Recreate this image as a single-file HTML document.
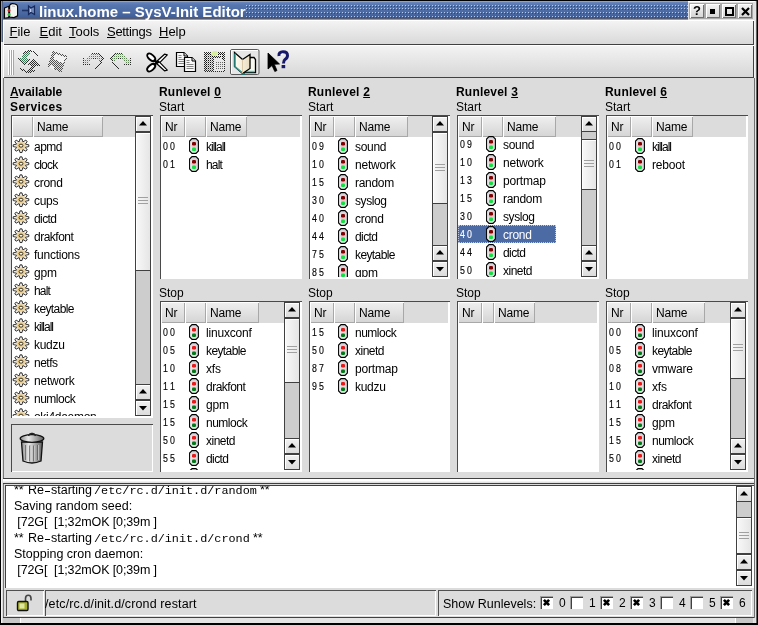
<!DOCTYPE html><html><head><meta charset="utf-8"><style>
html,body{margin:0;padding:0;} body{width:758px;height:625px;position:relative;overflow:hidden;background:#dcdcdc;font-family:"Liberation Sans", sans-serif;}
.t{position:absolute;white-space:pre;} body{will-change:transform;}
u{text-decoration:underline;text-decoration-thickness:1px;text-underline-offset:1px;}
</style></head><body>
<div style="position:absolute;left:0px;top:0px;width:758px;height:625px;background:#000;"></div>
<div style="position:absolute;left:1px;top:1px;width:756px;height:623px;background:#dcdcdc;"></div>
<div style="position:absolute;left:1px;top:1px;width:1px;height:41px;background:#8898b8;"></div>
<div style="position:absolute;left:2px;top:1px;width:1px;height:41px;background:#506080;"></div>
<div style="position:absolute;left:1px;top:42px;width:1px;height:582px;background:#f4f4f4;"></div>
<div style="position:absolute;left:756px;top:1px;width:1px;height:622px;background:#606060;"></div>
<div style="position:absolute;left:755px;top:1px;width:1px;height:622px;background:#e4e4e4;"></div>
<div style="position:absolute;left:754px;top:20px;width:1px;height:58px;background:#f4f4f4;"></div>
<div style="position:absolute;left:754px;top:78px;width:1px;height:540px;background:#707070;"></div>
<div style="position:absolute;left:3px;top:1px;width:685px;height:19px;background:linear-gradient(#8fa3c8 0px,#8fa3c8 1px,#6a86bc 1px,#5676b0 4px,#4a68a2 12px,#3e5c96 17px,#525a74 17px,#525a74 18px,#9098a8 18px);"></div>
<svg style="position:absolute;left:245px;top:4px" width="443" height="15" shape-rendering="crispEdges"><defs>
<pattern id="tdots" x="1" y="0" width="3" height="15" patternUnits="userSpaceOnUse">
<rect x="0" y="1" width="1" height="1" fill="#b4c8f0"/><rect x="1" y="2" width="1" height="1" fill="#2c4a82"/>
<rect x="0" y="4" width="1" height="1" fill="#b4c8f0"/><rect x="1" y="5" width="1" height="1" fill="#2c4a82"/>
<rect x="0" y="8" width="1" height="1" fill="#b4c8f0"/><rect x="1" y="9" width="1" height="1" fill="#2c4a82"/>
<rect x="0" y="12" width="1" height="1" fill="#b4c8f0"/><rect x="1" y="13" width="1" height="1" fill="#2c4a82"/>
</pattern></defs><rect x="0" y="0" width="443" height="15" fill="url(#tdots)"/></svg>
<svg style="position:absolute;left:0px;top:0px" width="40" height="20" viewBox="0 0 40 20">
<path d="M4.5 8 L8.8 6.3 L8.8 17.6 L4.5 18.2 Z" fill="#e4e4dc" stroke="#000" stroke-width="1.1"/>
<path d="M9.6 5.5 Q10.5 3.5 12.5 3.6 L15 4 Q17.6 4.6 17.6 6.8 L17.6 15.8 L14 17.6 L9.6 17 Z" fill="#f4f4f0" stroke="#000" stroke-width="1.1"/>
<path d="M12 6 L15 6.5" stroke="#b0b0b0" stroke-width="0.8"/>
<circle cx="9" cy="10.5" r="1.4" fill="#d02828"/><circle cx="9" cy="14.6" r="1.5" fill="#28c838"/>
<path d="M22 10.5 H28.5" stroke="#1e3464" stroke-width="1.6"/>
<path d="M28.5 6 L31 8 L34.5 6 L34.5 14.5 L31 12.5 L28.5 14.5 Z" fill="#7088b8" stroke="#17285a" stroke-width="1.2"/>
<path d="M30.5 9 V12" stroke="#c8d4f0" stroke-width="0.9"/>
</svg>
<div class="t" style="left:39px;top:4px;font-size:15px;line-height:15px;font-weight:bold;color:#fff;">linux.home – SysV-Init Editor</div>
<div style="position:absolute;left:688px;top:1px;width:67px;height:19px;background:#e0e0e0;"></div>
<div style="position:absolute;left:688px;top:1px;width:67px;height:1px;background:#ffffff;"></div>
<div style="position:absolute;left:690px;top:4px;width:14px;height:14px;background:linear-gradient(#f4f4f4,#d4d4d4);box-shadow: inset 1px 1px 0 #fff, inset -1px -1px 0 #707070, 0 0 0 1px #a8a8a8;"></div>
<div style="position:absolute;left:706px;top:4px;width:14px;height:14px;background:linear-gradient(#f4f4f4,#d4d4d4);box-shadow: inset 1px 1px 0 #fff, inset -1px -1px 0 #707070, 0 0 0 1px #a8a8a8;"></div>
<div style="position:absolute;left:722px;top:4px;width:14px;height:14px;background:linear-gradient(#f4f4f4,#d4d4d4);box-shadow: inset 1px 1px 0 #fff, inset -1px -1px 0 #707070, 0 0 0 1px #a8a8a8;"></div>
<div style="position:absolute;left:738px;top:4px;width:14px;height:14px;background:linear-gradient(#f4f4f4,#d4d4d4);box-shadow: inset 1px 1px 0 #fff, inset -1px -1px 0 #707070, 0 0 0 1px #a8a8a8;"></div>
<div class="t" style="left:690px;top:3px;font-size:13px;font-weight:bold;line-height:16px;width:14px;text-align:center">?</div>
<div style="position:absolute;left:710px;top:9px;width:5px;height:5px;background:#000;"></div>
<div style="position:absolute;left:725px;top:7px;width:9px;height:9px;box-shadow: inset 0 0 0 2px #000;"></div>
<svg style="position:absolute;left:741px;top:7px" width="9" height="9"><path d="M1 1 L8 8 M8 1 L1 8" stroke="#000" stroke-width="2.2"/></svg>
<div style="position:absolute;left:3px;top:20px;width:751px;height:25px;background:linear-gradient(#f4f4f4,#d8d8d8);box-shadow: inset 1px 1px 0 #ffffff, inset -1px -1px 0 #404040;"></div>
<div class="t" style="left:9.5px;top:25px;font-size:13px;line-height:13px;color:#000;"><u>F</u>ile</div>
<div class="t" style="left:39.5px;top:25px;font-size:13px;line-height:13px;color:#000;"><u>E</u>dit</div>
<div class="t" style="left:69px;top:25px;font-size:13px;line-height:13px;color:#000;"><u>T</u>ools</div>
<div class="t" style="left:107px;top:25px;font-size:13px;line-height:13px;letter-spacing:-0.3px;color:#000;"><u>S</u>ettings</div>
<div class="t" style="left:159px;top:25px;font-size:13px;line-height:13px;color:#000;"><u>H</u>elp</div>
<div style="position:absolute;left:3px;top:45px;width:751px;height:33px;background:linear-gradient(#f4f4f4,#d6d6d6);box-shadow: inset 1px 1px 0 #ffffff, inset -1px -1px 0 #404040;"></div>
<div style="position:absolute;left:8px;top:50px;width:1px;height:25px;background:#ffffff;"></div>
<div style="position:absolute;left:9px;top:50px;width:1px;height:25px;background:#a8a8a8;"></div>
<div style="position:absolute;left:10px;top:50px;width:1px;height:25px;background:#ffffff;"></div>
<div style="position:absolute;left:11px;top:50px;width:1px;height:25px;background:#a8a8a8;"></div>
<div style="position:absolute;left:12px;top:50px;width:1px;height:25px;background:#ffffff;"></div>
<div style="position:absolute;left:13px;top:50px;width:1px;height:25px;background:#a8a8a8;"></div>
<svg width="0" height="0" style="position:absolute"><defs>
<pattern id="chk" width="2" height="2" patternUnits="userSpaceOnUse"><rect x="0" y="0" width="1" height="1" fill="#282828"/><rect x="1" y="1" width="1" height="1" fill="#282828"/></pattern>
<pattern id="chkl" width="2" height="2" patternUnits="userSpaceOnUse"><rect x="0" y="0" width="1" height="1" fill="#000"/></pattern>
<pattern id="chkgr" width="2" height="2" patternUnits="userSpaceOnUse"><rect x="0" y="0" width="1" height="1" fill="#3a6a30"/><rect x="1" y="1" width="1" height="1" fill="#b0f080"/></pattern>
<pattern id="chkmint" width="2" height="2" patternUnits="userSpaceOnUse"><rect x="0" y="0" width="2" height="2" fill="#c8f4dc"/><rect x="0" y="0" width="1" height="1" fill="#3a7a58"/><rect x="1" y="1" width="1" height="1" fill="#3a7a58"/></pattern><pattern id="chkg2" width="2" height="2" patternUnits="userSpaceOnUse"><rect x="0" y="0" width="1" height="1" fill="#505050"/><rect x="1" y="1" width="1" height="1" fill="#505050"/></pattern></defs></svg>
<svg style="position:absolute;left:12px;top:46px" width="34" height="30" viewBox="0 0 34 30" shape-rendering="crispEdges">
<path d="M6.5 12.5 L12.5 18.5 L17 13 L15 12 L18.5 7.5 L16 5.5 L11.5 8 L10 11.5 Z" fill="url(#chkmint)"/>
<path d="M6 12.5 L12.5 19 L17.5 13 M11 7.5 L16 5 L20 5 L26.5 10" fill="none" stroke="url(#chk)" stroke-width="1.4"/>
<path d="M16.5 18.5 L21.5 13 L28 19.5 L24 19.5 L20 25 L16 24.5 L19.5 19 Z" fill="url(#chk)"/>
<path d="M16 18.5 L21.5 13 L28 19.5 M8 22 L14 26 L19 26 L23 24" fill="none" stroke="url(#chk)" stroke-width="1.4"/>
</svg>
<svg style="position:absolute;left:44px;top:46px" width="30" height="30" viewBox="0 0 30 30" shape-rendering="crispEdges">
<path d="M8.5 5 L23.5 10 L17.5 26.5 L3.5 20.5 Z" fill="url(#chkg2)"/>
<path d="M11 8 L22 11 L19 17 L9 13 Z" fill="#f2f2f2"/>
<path d="M7 19 L11 21 L9.5 24 L5.5 22 Z" fill="#eeeeee"/>
</svg>
<svg style="position:absolute;left:79px;top:48px" width="28" height="28" viewBox="0 0 28 28" shape-rendering="crispEdges">
<path d="M4.5 9 L4.5 16.5 L12 16.5 L10 14.5 L14 10 L17 9.5 L21 13 L24 11 L19 6 L14 5 L9 8 L7 11.5 Z" fill="url(#chkgr)" opacity="0.8"/>
<path d="M4.5 9 L4.5 16.5 L12 16.5" fill="none" stroke="url(#chk)" stroke-width="1.5"/>
<path d="M13 5.5 L19 5.5 L24.5 11 L16 21.5" fill="none" stroke="url(#chk)" stroke-width="1.5"/>
<path d="M10 14 L14 10 L18 10.5" fill="none" stroke="url(#chk)" stroke-width="1.2"/>
</svg>
<svg style="position:absolute;left:107px;top:48px" width="28" height="28" viewBox="0 0 28 28" shape-rendering="crispEdges">
<g transform="translate(28,0) scale(-1,1)">
<path d="M4.5 9 L4.5 16.5 L12 16.5 L10 14.5 L14 10 L17 9.5 L21 13 L24 11 L19 6 L14 5 L9 8 L7 11.5 Z" fill="url(#chkgr)" opacity="0.8"/>
<path d="M4.5 9 L4.5 16.5 L12 16.5" fill="none" stroke="url(#chk)" stroke-width="1.5"/>
<path d="M13 5.5 L19 5.5 L24.5 11 L16 21.5" fill="none" stroke="url(#chk)" stroke-width="1.5"/>
<path d="M10 14 L14 10 L18 10.5" fill="none" stroke="url(#chk)" stroke-width="1.2"/>
</g></svg>
<svg style="position:absolute;left:143px;top:48px" width="28" height="28" viewBox="0 0 28 28">
<path d="M13 14 L21.5 6.2 L24.3 6.8 L15.5 15.8 Z" fill="#fff" stroke="#000" stroke-width="1.2" stroke-linejoin="round"/>
<path d="M13 15 L21.5 22.8 L24.3 22.2 L15.5 13.2 Z" fill="#fff" stroke="#000" stroke-width="1.2" stroke-linejoin="round"/>
<ellipse cx="8.2" cy="9.3" rx="4.8" ry="2.6" transform="rotate(42 8.2 9.3)" fill="#fff" stroke="#000" stroke-width="1.9"/>
<ellipse cx="8.2" cy="19.7" rx="4.8" ry="2.6" transform="rotate(-42 8.2 19.7)" fill="#fff" stroke="#000" stroke-width="1.9"/>
<path d="M10.5 12 L14.5 14.5 L10.5 17" fill="none" stroke="#000" stroke-width="2.2"/>
</svg>
<svg style="position:absolute;left:172px;top:48px" width="28" height="28" viewBox="0 0 28 28">
<path d="M4.5 4.5 H12 L15.5 8 V18.5 H4.5 Z" fill="#f8f8f8" stroke="#000" stroke-width="1.2"/>
<path d="M12 4.5 V8 H15.5" fill="#ddd" stroke="#000" stroke-width="1"/>
<path d="M6.5 7.5 h3 M6.5 9.5 h3 M6.5 11.5 h7 M6.5 13.5 h7 M6.5 15.5 h7" stroke="#777" stroke-width="0.9"/>
<path d="M12.5 9.5 H20 L23.5 13 V23.5 H12.5 Z" fill="#f8f8f8" stroke="#000" stroke-width="1.2"/>
<path d="M20 9.5 V13 H23.5" fill="#ddd" stroke="#000" stroke-width="1"/>
<path d="M14.5 12.5 h3 M14.5 14.5 h3 M14.5 16.5 h7 M14.5 18.5 h7 M14.5 20.5 h7" stroke="#777" stroke-width="0.9"/>
</svg>
<svg style="position:absolute;left:200px;top:46px" width="30" height="30" viewBox="0 0 30 30" shape-rendering="crispEdges">
<path d="M5 7 L24 7 L24 25 L5 25 Z" fill="url(#chkl)"/><path d="M6 8 L13 8 L13 24 L6 24 Z" fill="url(#chk)" opacity="0.35"/><path d="M5 7 L24 7 L24 25 L5 25 Z" fill="none" stroke="url(#chk)" stroke-width="1.6"/>
<path d="M13 11 L20 11 L24 15 L24 25 L13 25 Z" fill="#e8e8e8"/>
<path d="M15 16 L23 16 L23 24 L15 24 Z" fill="url(#chkl)" opacity="0.55"/>
<path d="M13 11 L20 11 L24 15 M13 11 L13 25" fill="none" stroke="url(#chk)" stroke-width="1.2"/>
<path d="M10 8 L13 5 L17 5 L18 8 L15 10 L12 10 Z" fill="#d8f0a0"/>
</svg>
<svg style="position:absolute;left:228px;top:46px" width="34" height="32" viewBox="0 0 34 32">
<defs><linearGradient id="pg" x1="0" x2="1"><stop offset="0" stop-color="#fffef4"/><stop offset="1" stop-color="#e8dcc0"/></linearGradient></defs>
<rect x="2.5" y="3.5" width="28.5" height="25" rx="1.5" fill="#e6e6e6" stroke="#5a5a5a" stroke-width="1"/>
<path d="M3.5 27.5 V4.5 H30" fill="none" stroke="#fff" stroke-width="1"/>
<path d="M22 11.5 H26 L27.5 13.5 V26.5 H16.5 Z" fill="#fafaf0" stroke="#000" stroke-width="1.3"/>
<path d="M17 25.5 H26.5" stroke="#50c8c0" stroke-width="1.5"/>
<path d="M6.5 6.5 L14.5 13.5 L22 8.5 V22.5 L14.5 27.5 L6.5 20.5 Z" fill="url(#pg)" stroke="#000" stroke-width="1.3"/>
<path d="M7 7.5 V20.5 L14.5 27" fill="none" stroke="#30a098" stroke-width="1.5"/>
<path d="M14.5 13.5 V27" stroke="#d8c8a8" stroke-width="1"/>
<path d="M14 28 H17" stroke="#207070" stroke-width="2"/>
</svg>
<svg style="position:absolute;left:264px;top:48px" width="28" height="28" viewBox="0 0 28 28">
<path d="M4 5 L4 21 L8 17.5 L10.8 23.5 L13 22.5 L10.3 16.3 L15.5 16 Z" fill="#000" stroke="#000" stroke-width="0.8"/>
<path d="M15 8 Q14.5 3.8 19 3.8 Q23.5 3.8 23.5 7.5 Q23.5 10 21 11.5 Q19.5 12.5 19.5 15.5" fill="none" stroke="#18186a" stroke-width="3"/>
<path d="M17.2 7.2 Q17.5 6 19 6" fill="none" stroke="#fff" stroke-width="1.1"/>
<rect x="17.6" y="17" width="3.6" height="3.2" fill="#18186a"/>
</svg>

<svg width="0" height="0" style="position:absolute"><defs><radialGradient id="gg" cx="0.5" cy="0.5" r="0.5"><stop offset="0" stop-color="#fff4c8"/><stop offset="0.3" stop-color="#ecc878"/><stop offset="0.55" stop-color="#e8d8b8"/><stop offset="0.8" stop-color="#f4f4f4"/><stop offset="1" stop-color="#d8d8d8"/></radialGradient></defs></svg>
<div style="position:absolute;left:3px;top:78px;width:1px;height:540px;background:#787878;"></div>
<div class="t" style="left:10px;top:86px;font-size:12px;line-height:12px;font-weight:bold;color:#000;"><u>A</u>vailable</div>
<div class="t" style="left:10px;top:101px;font-size:12px;line-height:12px;font-weight:bold;letter-spacing:0.4px;color:#000;">Services</div>
<div style="position:absolute;left:11px;top:115px;width:142px;height:303px;background:#fff;overflow:hidden;">
<div style="position:absolute;left:1px;top:1px;width:140px;height:21px;background:#dcdcdc;"></div>
<div style="position:absolute;left:1px;top:1px;width:21px;height:21px;background:linear-gradient(#f0f0f0,#d4d4d4);box-shadow: inset 1px 1px 0 #fff, inset -1px -1px 0 #a8a8a8;"></div>
<div style="position:absolute;left:22px;top:1px;width:70px;height:21px;background:linear-gradient(#f0f0f0,#d4d4d4);box-shadow: inset 1px 1px 0 #fff, inset -1px -1px 0 #a8a8a8;"></div>
<div class="t" style="left:26px;top:6px;font-size:12px;line-height:12px;letter-spacing:-0.2px;color:#000;">Name</div>
<svg style="position:absolute;left:0px;top:22px" width="20" height="18" viewBox="0 0 20 18">
<path d="M8.27 4.68 L8.98 1.86 L11.02 1.86 L11.73 4.68 L12.02 4.78 L14.81 3.23 L16.26 4.49 L14.46 6.93 L14.59 7.19 L17.83 7.81 L17.83 9.59 L14.59 10.21 L14.46 10.47 L16.26 12.91 L14.81 14.17 L12.02 12.62 L11.73 12.72 L11.02 15.54 L8.98 15.54 L8.27 12.72 L7.98 12.62 L5.19 14.17 L3.74 12.91 L5.54 10.47 L5.41 10.21 L2.17 9.59 L2.17 7.81 L5.41 7.19 L5.54 6.93 L3.74 4.49 L5.19 3.23 L7.98 4.78 Z" fill="url(#gg)" stroke="#151515" stroke-width="0.85"/>
<ellipse cx="10" cy="8.7" rx="1.9" ry="1.5" fill="#fffbe8" stroke="#2a2010" stroke-width="0.9"/>
</svg>
<div class="t" style="left:23px;top:26px;font-size:12px;line-height:12px;letter-spacing:-0.5px;color:#000;">apmd</div>
<svg style="position:absolute;left:0px;top:40px" width="20" height="18" viewBox="0 0 20 18">
<path d="M8.27 4.68 L8.98 1.86 L11.02 1.86 L11.73 4.68 L12.02 4.78 L14.81 3.23 L16.26 4.49 L14.46 6.93 L14.59 7.19 L17.83 7.81 L17.83 9.59 L14.59 10.21 L14.46 10.47 L16.26 12.91 L14.81 14.17 L12.02 12.62 L11.73 12.72 L11.02 15.54 L8.98 15.54 L8.27 12.72 L7.98 12.62 L5.19 14.17 L3.74 12.91 L5.54 10.47 L5.41 10.21 L2.17 9.59 L2.17 7.81 L5.41 7.19 L5.54 6.93 L3.74 4.49 L5.19 3.23 L7.98 4.78 Z" fill="url(#gg)" stroke="#151515" stroke-width="0.85"/>
<ellipse cx="10" cy="8.7" rx="1.9" ry="1.5" fill="#fffbe8" stroke="#2a2010" stroke-width="0.9"/>
</svg>
<div class="t" style="left:23px;top:44px;font-size:12px;line-height:12px;letter-spacing:-0.8px;color:#000;">clock</div>
<svg style="position:absolute;left:0px;top:58px" width="20" height="18" viewBox="0 0 20 18">
<path d="M8.27 4.68 L8.98 1.86 L11.02 1.86 L11.73 4.68 L12.02 4.78 L14.81 3.23 L16.26 4.49 L14.46 6.93 L14.59 7.19 L17.83 7.81 L17.83 9.59 L14.59 10.21 L14.46 10.47 L16.26 12.91 L14.81 14.17 L12.02 12.62 L11.73 12.72 L11.02 15.54 L8.98 15.54 L8.27 12.72 L7.98 12.62 L5.19 14.17 L3.74 12.91 L5.54 10.47 L5.41 10.21 L2.17 9.59 L2.17 7.81 L5.41 7.19 L5.54 6.93 L3.74 4.49 L5.19 3.23 L7.98 4.78 Z" fill="url(#gg)" stroke="#151515" stroke-width="0.85"/>
<ellipse cx="10" cy="8.7" rx="1.9" ry="1.5" fill="#fffbe8" stroke="#2a2010" stroke-width="0.9"/>
</svg>
<div class="t" style="left:23px;top:62px;font-size:12px;line-height:12px;letter-spacing:-0.3px;color:#000;">crond</div>
<svg style="position:absolute;left:0px;top:76px" width="20" height="18" viewBox="0 0 20 18">
<path d="M8.27 4.68 L8.98 1.86 L11.02 1.86 L11.73 4.68 L12.02 4.78 L14.81 3.23 L16.26 4.49 L14.46 6.93 L14.59 7.19 L17.83 7.81 L17.83 9.59 L14.59 10.21 L14.46 10.47 L16.26 12.91 L14.81 14.17 L12.02 12.62 L11.73 12.72 L11.02 15.54 L8.98 15.54 L8.27 12.72 L7.98 12.62 L5.19 14.17 L3.74 12.91 L5.54 10.47 L5.41 10.21 L2.17 9.59 L2.17 7.81 L5.41 7.19 L5.54 6.93 L3.74 4.49 L5.19 3.23 L7.98 4.78 Z" fill="url(#gg)" stroke="#151515" stroke-width="0.85"/>
<ellipse cx="10" cy="8.7" rx="1.9" ry="1.5" fill="#fffbe8" stroke="#2a2010" stroke-width="0.9"/>
</svg>
<div class="t" style="left:23px;top:80px;font-size:12px;line-height:12px;letter-spacing:-0.3px;color:#000;">cups</div>
<svg style="position:absolute;left:0px;top:94px" width="20" height="18" viewBox="0 0 20 18">
<path d="M8.27 4.68 L8.98 1.86 L11.02 1.86 L11.73 4.68 L12.02 4.78 L14.81 3.23 L16.26 4.49 L14.46 6.93 L14.59 7.19 L17.83 7.81 L17.83 9.59 L14.59 10.21 L14.46 10.47 L16.26 12.91 L14.81 14.17 L12.02 12.62 L11.73 12.72 L11.02 15.54 L8.98 15.54 L8.27 12.72 L7.98 12.62 L5.19 14.17 L3.74 12.91 L5.54 10.47 L5.41 10.21 L2.17 9.59 L2.17 7.81 L5.41 7.19 L5.54 6.93 L3.74 4.49 L5.19 3.23 L7.98 4.78 Z" fill="url(#gg)" stroke="#151515" stroke-width="0.85"/>
<ellipse cx="10" cy="8.7" rx="1.9" ry="1.5" fill="#fffbe8" stroke="#2a2010" stroke-width="0.9"/>
</svg>
<div class="t" style="left:23px;top:98px;font-size:12px;line-height:12px;letter-spacing:-0.6px;color:#000;">dictd</div>
<svg style="position:absolute;left:0px;top:112px" width="20" height="18" viewBox="0 0 20 18">
<path d="M8.27 4.68 L8.98 1.86 L11.02 1.86 L11.73 4.68 L12.02 4.78 L14.81 3.23 L16.26 4.49 L14.46 6.93 L14.59 7.19 L17.83 7.81 L17.83 9.59 L14.59 10.21 L14.46 10.47 L16.26 12.91 L14.81 14.17 L12.02 12.62 L11.73 12.72 L11.02 15.54 L8.98 15.54 L8.27 12.72 L7.98 12.62 L5.19 14.17 L3.74 12.91 L5.54 10.47 L5.41 10.21 L2.17 9.59 L2.17 7.81 L5.41 7.19 L5.54 6.93 L3.74 4.49 L5.19 3.23 L7.98 4.78 Z" fill="url(#gg)" stroke="#151515" stroke-width="0.85"/>
<ellipse cx="10" cy="8.7" rx="1.9" ry="1.5" fill="#fffbe8" stroke="#2a2010" stroke-width="0.9"/>
</svg>
<div class="t" style="left:23px;top:116px;font-size:12px;line-height:12px;letter-spacing:-0.5px;color:#000;">drakfont</div>
<svg style="position:absolute;left:0px;top:130px" width="20" height="18" viewBox="0 0 20 18">
<path d="M8.27 4.68 L8.98 1.86 L11.02 1.86 L11.73 4.68 L12.02 4.78 L14.81 3.23 L16.26 4.49 L14.46 6.93 L14.59 7.19 L17.83 7.81 L17.83 9.59 L14.59 10.21 L14.46 10.47 L16.26 12.91 L14.81 14.17 L12.02 12.62 L11.73 12.72 L11.02 15.54 L8.98 15.54 L8.27 12.72 L7.98 12.62 L5.19 14.17 L3.74 12.91 L5.54 10.47 L5.41 10.21 L2.17 9.59 L2.17 7.81 L5.41 7.19 L5.54 6.93 L3.74 4.49 L5.19 3.23 L7.98 4.78 Z" fill="url(#gg)" stroke="#151515" stroke-width="0.85"/>
<ellipse cx="10" cy="8.7" rx="1.9" ry="1.5" fill="#fffbe8" stroke="#2a2010" stroke-width="0.9"/>
</svg>
<div class="t" style="left:23px;top:134px;font-size:12px;line-height:12px;letter-spacing:-0.25px;color:#000;">functions</div>
<svg style="position:absolute;left:0px;top:148px" width="20" height="18" viewBox="0 0 20 18">
<path d="M8.27 4.68 L8.98 1.86 L11.02 1.86 L11.73 4.68 L12.02 4.78 L14.81 3.23 L16.26 4.49 L14.46 6.93 L14.59 7.19 L17.83 7.81 L17.83 9.59 L14.59 10.21 L14.46 10.47 L16.26 12.91 L14.81 14.17 L12.02 12.62 L11.73 12.72 L11.02 15.54 L8.98 15.54 L8.27 12.72 L7.98 12.62 L5.19 14.17 L3.74 12.91 L5.54 10.47 L5.41 10.21 L2.17 9.59 L2.17 7.81 L5.41 7.19 L5.54 6.93 L3.74 4.49 L5.19 3.23 L7.98 4.78 Z" fill="url(#gg)" stroke="#151515" stroke-width="0.85"/>
<ellipse cx="10" cy="8.7" rx="1.9" ry="1.5" fill="#fffbe8" stroke="#2a2010" stroke-width="0.9"/>
</svg>
<div class="t" style="left:23px;top:152px;font-size:12px;line-height:12px;letter-spacing:-0.2px;color:#000;">gpm</div>
<svg style="position:absolute;left:0px;top:166px" width="20" height="18" viewBox="0 0 20 18">
<path d="M8.27 4.68 L8.98 1.86 L11.02 1.86 L11.73 4.68 L12.02 4.78 L14.81 3.23 L16.26 4.49 L14.46 6.93 L14.59 7.19 L17.83 7.81 L17.83 9.59 L14.59 10.21 L14.46 10.47 L16.26 12.91 L14.81 14.17 L12.02 12.62 L11.73 12.72 L11.02 15.54 L8.98 15.54 L8.27 12.72 L7.98 12.62 L5.19 14.17 L3.74 12.91 L5.54 10.47 L5.41 10.21 L2.17 9.59 L2.17 7.81 L5.41 7.19 L5.54 6.93 L3.74 4.49 L5.19 3.23 L7.98 4.78 Z" fill="url(#gg)" stroke="#151515" stroke-width="0.85"/>
<ellipse cx="10" cy="8.7" rx="1.9" ry="1.5" fill="#fffbe8" stroke="#2a2010" stroke-width="0.9"/>
</svg>
<div class="t" style="left:23px;top:170px;font-size:12px;line-height:12px;letter-spacing:-0.8px;color:#000;">halt</div>
<svg style="position:absolute;left:0px;top:184px" width="20" height="18" viewBox="0 0 20 18">
<path d="M8.27 4.68 L8.98 1.86 L11.02 1.86 L11.73 4.68 L12.02 4.78 L14.81 3.23 L16.26 4.49 L14.46 6.93 L14.59 7.19 L17.83 7.81 L17.83 9.59 L14.59 10.21 L14.46 10.47 L16.26 12.91 L14.81 14.17 L12.02 12.62 L11.73 12.72 L11.02 15.54 L8.98 15.54 L8.27 12.72 L7.98 12.62 L5.19 14.17 L3.74 12.91 L5.54 10.47 L5.41 10.21 L2.17 9.59 L2.17 7.81 L5.41 7.19 L5.54 6.93 L3.74 4.49 L5.19 3.23 L7.98 4.78 Z" fill="url(#gg)" stroke="#151515" stroke-width="0.85"/>
<ellipse cx="10" cy="8.7" rx="1.9" ry="1.5" fill="#fffbe8" stroke="#2a2010" stroke-width="0.9"/>
</svg>
<div class="t" style="left:23px;top:188px;font-size:12px;line-height:12px;letter-spacing:-0.6px;color:#000;">keytable</div>
<svg style="position:absolute;left:0px;top:202px" width="20" height="18" viewBox="0 0 20 18">
<path d="M8.27 4.68 L8.98 1.86 L11.02 1.86 L11.73 4.68 L12.02 4.78 L14.81 3.23 L16.26 4.49 L14.46 6.93 L14.59 7.19 L17.83 7.81 L17.83 9.59 L14.59 10.21 L14.46 10.47 L16.26 12.91 L14.81 14.17 L12.02 12.62 L11.73 12.72 L11.02 15.54 L8.98 15.54 L8.27 12.72 L7.98 12.62 L5.19 14.17 L3.74 12.91 L5.54 10.47 L5.41 10.21 L2.17 9.59 L2.17 7.81 L5.41 7.19 L5.54 6.93 L3.74 4.49 L5.19 3.23 L7.98 4.78 Z" fill="url(#gg)" stroke="#151515" stroke-width="0.85"/>
<ellipse cx="10" cy="8.7" rx="1.9" ry="1.5" fill="#fffbe8" stroke="#2a2010" stroke-width="0.9"/>
</svg>
<div class="t" style="left:23px;top:206px;font-size:12px;line-height:12px;letter-spacing:-1.0px;color:#000;">killall</div>
<svg style="position:absolute;left:0px;top:220px" width="20" height="18" viewBox="0 0 20 18">
<path d="M8.27 4.68 L8.98 1.86 L11.02 1.86 L11.73 4.68 L12.02 4.78 L14.81 3.23 L16.26 4.49 L14.46 6.93 L14.59 7.19 L17.83 7.81 L17.83 9.59 L14.59 10.21 L14.46 10.47 L16.26 12.91 L14.81 14.17 L12.02 12.62 L11.73 12.72 L11.02 15.54 L8.98 15.54 L8.27 12.72 L7.98 12.62 L5.19 14.17 L3.74 12.91 L5.54 10.47 L5.41 10.21 L2.17 9.59 L2.17 7.81 L5.41 7.19 L5.54 6.93 L3.74 4.49 L5.19 3.23 L7.98 4.78 Z" fill="url(#gg)" stroke="#151515" stroke-width="0.85"/>
<ellipse cx="10" cy="8.7" rx="1.9" ry="1.5" fill="#fffbe8" stroke="#2a2010" stroke-width="0.9"/>
</svg>
<div class="t" style="left:23px;top:224px;font-size:12px;line-height:12px;letter-spacing:-0.3px;color:#000;">kudzu</div>
<svg style="position:absolute;left:0px;top:238px" width="20" height="18" viewBox="0 0 20 18">
<path d="M8.27 4.68 L8.98 1.86 L11.02 1.86 L11.73 4.68 L12.02 4.78 L14.81 3.23 L16.26 4.49 L14.46 6.93 L14.59 7.19 L17.83 7.81 L17.83 9.59 L14.59 10.21 L14.46 10.47 L16.26 12.91 L14.81 14.17 L12.02 12.62 L11.73 12.72 L11.02 15.54 L8.98 15.54 L8.27 12.72 L7.98 12.62 L5.19 14.17 L3.74 12.91 L5.54 10.47 L5.41 10.21 L2.17 9.59 L2.17 7.81 L5.41 7.19 L5.54 6.93 L3.74 4.49 L5.19 3.23 L7.98 4.78 Z" fill="url(#gg)" stroke="#151515" stroke-width="0.85"/>
<ellipse cx="10" cy="8.7" rx="1.9" ry="1.5" fill="#fffbe8" stroke="#2a2010" stroke-width="0.9"/>
</svg>
<div class="t" style="left:23px;top:242px;font-size:12px;line-height:12px;letter-spacing:-0.5px;color:#000;">netfs</div>
<svg style="position:absolute;left:0px;top:256px" width="20" height="18" viewBox="0 0 20 18">
<path d="M8.27 4.68 L8.98 1.86 L11.02 1.86 L11.73 4.68 L12.02 4.78 L14.81 3.23 L16.26 4.49 L14.46 6.93 L14.59 7.19 L17.83 7.81 L17.83 9.59 L14.59 10.21 L14.46 10.47 L16.26 12.91 L14.81 14.17 L12.02 12.62 L11.73 12.72 L11.02 15.54 L8.98 15.54 L8.27 12.72 L7.98 12.62 L5.19 14.17 L3.74 12.91 L5.54 10.47 L5.41 10.21 L2.17 9.59 L2.17 7.81 L5.41 7.19 L5.54 6.93 L3.74 4.49 L5.19 3.23 L7.98 4.78 Z" fill="url(#gg)" stroke="#151515" stroke-width="0.85"/>
<ellipse cx="10" cy="8.7" rx="1.9" ry="1.5" fill="#fffbe8" stroke="#2a2010" stroke-width="0.9"/>
</svg>
<div class="t" style="left:23px;top:260px;font-size:12px;line-height:12px;letter-spacing:-0.2px;color:#000;">network</div>
<svg style="position:absolute;left:0px;top:274px" width="20" height="18" viewBox="0 0 20 18">
<path d="M8.27 4.68 L8.98 1.86 L11.02 1.86 L11.73 4.68 L12.02 4.78 L14.81 3.23 L16.26 4.49 L14.46 6.93 L14.59 7.19 L17.83 7.81 L17.83 9.59 L14.59 10.21 L14.46 10.47 L16.26 12.91 L14.81 14.17 L12.02 12.62 L11.73 12.72 L11.02 15.54 L8.98 15.54 L8.27 12.72 L7.98 12.62 L5.19 14.17 L3.74 12.91 L5.54 10.47 L5.41 10.21 L2.17 9.59 L2.17 7.81 L5.41 7.19 L5.54 6.93 L3.74 4.49 L5.19 3.23 L7.98 4.78 Z" fill="url(#gg)" stroke="#151515" stroke-width="0.85"/>
<ellipse cx="10" cy="8.7" rx="1.9" ry="1.5" fill="#fffbe8" stroke="#2a2010" stroke-width="0.9"/>
</svg>
<div class="t" style="left:23px;top:278px;font-size:12px;line-height:12px;letter-spacing:-0.5px;color:#000;">numlock</div>
<svg style="position:absolute;left:0px;top:292px" width="20" height="18" viewBox="0 0 20 18">
<path d="M8.27 4.68 L8.98 1.86 L11.02 1.86 L11.73 4.68 L12.02 4.78 L14.81 3.23 L16.26 4.49 L14.46 6.93 L14.59 7.19 L17.83 7.81 L17.83 9.59 L14.59 10.21 L14.46 10.47 L16.26 12.91 L14.81 14.17 L12.02 12.62 L11.73 12.72 L11.02 15.54 L8.98 15.54 L8.27 12.72 L7.98 12.62 L5.19 14.17 L3.74 12.91 L5.54 10.47 L5.41 10.21 L2.17 9.59 L2.17 7.81 L5.41 7.19 L5.54 6.93 L3.74 4.49 L5.19 3.23 L7.98 4.78 Z" fill="url(#gg)" stroke="#151515" stroke-width="0.85"/>
<ellipse cx="10" cy="8.7" rx="1.9" ry="1.5" fill="#fffbe8" stroke="#2a2010" stroke-width="0.9"/>
</svg>
<div class="t" style="left:23px;top:296px;font-size:12px;line-height:12px;letter-spacing:-0.3px;color:#000;">oki4daemon</div>
<div style="position:absolute;left:124px;top:1px;width:16px;height:300px;background:#cdcdcd;"></div>
<div style="position:absolute;left:124px;top:1px;width:1px;height:300px;background:#404040;"></div>
<div style="position:absolute;left:139px;top:1px;width:1px;height:300px;background:#404040;"></div>
<div style="position:absolute;left:124px;top:1px;width:16px;height:16px;background:linear-gradient(#f2f2f2,#dadada);box-shadow: inset 0 0 0 1px #404040, inset 2px 2px 0 #fff;"></div>
<svg style="position:absolute;left:128px;top:6px" width="8" height="5"><path d="M4 0 L8 4.5 L0 4.5 Z" fill="#000"/></svg>
<div style="position:absolute;left:124px;top:17px;width:16px;height:139px;background:linear-gradient(90deg,#fafafa,#e4e4e4);box-shadow: inset 0 0 0 1px #404040, inset 2px 2px 0 #fff;"></div>
<div style="position:absolute;left:127px;top:82px;width:10px;height:1px;background:#a0a0a0;"></div>
<div style="position:absolute;left:127px;top:85px;width:10px;height:1px;background:#a0a0a0;"></div>
<div style="position:absolute;left:127px;top:88px;width:10px;height:1px;background:#a0a0a0;"></div>
<div style="position:absolute;left:124px;top:269px;width:16px;height:16px;background:linear-gradient(#f2f2f2,#dadada);box-shadow: inset 0 0 0 1px #404040, inset 2px 2px 0 #fff;"></div>
<svg style="position:absolute;left:128px;top:274px" width="8" height="5"><path d="M4 0 L8 4.5 L0 4.5 Z" fill="#000"/></svg>
<div style="position:absolute;left:124px;top:285px;width:16px;height:16px;background:linear-gradient(#f2f2f2,#dadada);box-shadow: inset 0 0 0 1px #404040, inset 2px 2px 0 #fff;"></div>
<svg style="position:absolute;left:128px;top:291px" width="8" height="5"><path d="M0 0 L8 0 L4 4.5 Z" fill="#000"/></svg>
<div style="position:absolute;left:0;top:0;width:142px;height:303px;box-shadow: inset 1px 1px 0 #4a4a4a, inset -1px -1px 0 #ffffff, inset -2px -2px 0 #ffffff;"></div>
</div>
<div style="position:absolute;left:11px;top:424px;width:142px;height:48px;background:#dcdcdc;overflow:hidden;">
<svg style="position:absolute;left:8px;top:8px" width="26" height="33" viewBox="0 0 26 33">
<defs><linearGradient id="tg" x1="0" x2="1"><stop offset="0" stop-color="#909090"/><stop offset="0.35" stop-color="#e8e8e8"/><stop offset="1" stop-color="#606060"/></linearGradient></defs>
<path d="M2.5 10 L4 29 Q13 33 22 29 L23.5 10 Z" fill="url(#tg)" stroke="#111" stroke-width="1.3"/>
<path d="M7 13 V28 M11 13.5 V29.5 M15 13.5 V29.5 M19 13 V28" stroke="#555" stroke-width="1.4"/>
<path d="M7.6 13 V28 M11.6 13.5 V29.5 M15.6 13.5 V29.5 M19.6 13 V28" stroke="#f4f4f4" stroke-width="0.7"/>
<ellipse cx="13" cy="6.5" rx="11.8" ry="3.8" fill="url(#tg)" stroke="#111" stroke-width="1.3"/>
<path d="M9.5 4 Q10.5 1 13 1.5 Q15.5 1 16.5 4" fill="none" stroke="#222" stroke-width="1.3"/>
</svg>
<div style="position:absolute;left:0;top:0;width:142px;height:48px;box-shadow: inset 1px 1px 0 #4a4a4a, inset -1px -1px 0 #ffffff;"></div>
</div>
<div class="t" style="left:159px;top:86px;font-size:12px;line-height:12px;font-weight:bold;letter-spacing:0.2px;color:#000;">Runlevel <u>0</u></div>
<div class="t" style="left:159px;top:101px;font-size:12px;line-height:12px;color:#000;">Start</div>
<div class="t" style="left:159px;top:287px;font-size:12px;line-height:12px;color:#000;">Stop</div>
<div class="t" style="left:308px;top:86px;font-size:12px;line-height:12px;font-weight:bold;letter-spacing:0.2px;color:#000;">Runlevel <u>2</u></div>
<div class="t" style="left:308px;top:101px;font-size:12px;line-height:12px;color:#000;">Start</div>
<div class="t" style="left:308px;top:287px;font-size:12px;line-height:12px;color:#000;">Stop</div>
<div class="t" style="left:456px;top:86px;font-size:12px;line-height:12px;font-weight:bold;letter-spacing:0.2px;color:#000;">Runlevel <u>3</u></div>
<div class="t" style="left:456px;top:101px;font-size:12px;line-height:12px;color:#000;">Start</div>
<div class="t" style="left:456px;top:287px;font-size:12px;line-height:12px;color:#000;">Stop</div>
<div class="t" style="left:605px;top:86px;font-size:12px;line-height:12px;font-weight:bold;letter-spacing:0.2px;color:#000;">Runlevel <u>6</u></div>
<div class="t" style="left:605px;top:101px;font-size:12px;line-height:12px;color:#000;">Start</div>
<div class="t" style="left:605px;top:287px;font-size:12px;line-height:12px;color:#000;">Stop</div>
<div style="position:absolute;left:160px;top:115px;width:142px;height:164px;background:#fff;overflow:hidden;">
<div style="position:absolute;left:1px;top:1px;width:140px;height:21px;background:#dcdcdc;"></div>
<div style="position:absolute;left:1px;top:1px;width:24px;height:21px;background:linear-gradient(#f0f0f0,#d4d4d4);box-shadow: inset 1px 1px 0 #fff, inset -1px -1px 0 #a8a8a8;"></div>
<div class="t" style="left:5px;top:6px;font-size:12px;line-height:12px;letter-spacing:-0.2px;color:#000;">Nr</div>
<div style="position:absolute;left:25px;top:1px;width:21px;height:21px;background:linear-gradient(#f0f0f0,#d4d4d4);box-shadow: inset 1px 1px 0 #fff, inset -1px -1px 0 #a8a8a8;"></div>
<div style="position:absolute;left:46px;top:1px;width:41px;height:21px;background:linear-gradient(#f0f0f0,#d4d4d4);box-shadow: inset 1px 1px 0 #fff, inset -1px -1px 0 #a8a8a8;"></div>
<div class="t" style="left:50px;top:6px;font-size:12px;line-height:12px;letter-spacing:-0.2px;color:#000;">Name</div>
<div class="t" style="left:2.7px;top:26px;font-size:11px;line-height:11px;color:#000;transform:scaleX(0.8);transform-origin:0 0;-webkit-text-stroke:0.15px #000;">0</div>
<div class="t" style="left:9.7px;top:26px;font-size:11px;line-height:11px;color:#000;transform:scaleX(0.8);transform-origin:0 0;-webkit-text-stroke:0.15px #000;">0</div>
<svg style="position:absolute;left:29px;top:23px" width="10" height="16" viewBox="0 0 10 16">
<path d="M3 0.6 H7 L9.4 3 V13 L7 15.4 H3 L0.6 13 V3 Z" fill="#d8d8dc" stroke="#000" stroke-width="1.1"/>
<path d="M2 3.5 V12.5" stroke="#f4f4f4" stroke-width="1"/>
<path d="M2.6 7.6 Q5 9.2 7.4 7.6" stroke="#f0c0c0" stroke-width="1.2" fill="none"/>
<path d="M2.6 13.1 Q5 14.6 7.4 13.1" stroke="#c0ffc8" stroke-width="1.1" fill="none"/>
<rect x="3" y="4" width="4" height="3.6" rx="1.3" fill="#800000"/>
<rect x="3" y="9.6" width="4" height="3.4" rx="1.3" fill="#10e040"/>
</svg>
<div class="t" style="left:46px;top:26px;font-size:12px;line-height:12px;letter-spacing:-1.0px;color:#000;">killall</div>
<div class="t" style="left:2.7px;top:44px;font-size:11px;line-height:11px;color:#000;transform:scaleX(0.8);transform-origin:0 0;-webkit-text-stroke:0.15px #000;">0</div>
<div class="t" style="left:9.7px;top:44px;font-size:11px;line-height:11px;color:#000;transform:scaleX(0.8);transform-origin:0 0;-webkit-text-stroke:0.15px #000;">1</div>
<svg style="position:absolute;left:29px;top:41px" width="10" height="16" viewBox="0 0 10 16">
<path d="M3 0.6 H7 L9.4 3 V13 L7 15.4 H3 L0.6 13 V3 Z" fill="#d8d8dc" stroke="#000" stroke-width="1.1"/>
<path d="M2 3.5 V12.5" stroke="#f4f4f4" stroke-width="1"/>
<path d="M2.6 7.6 Q5 9.2 7.4 7.6" stroke="#f0c0c0" stroke-width="1.2" fill="none"/>
<path d="M2.6 13.1 Q5 14.6 7.4 13.1" stroke="#c0ffc8" stroke-width="1.1" fill="none"/>
<rect x="3" y="4" width="4" height="3.6" rx="1.3" fill="#800000"/>
<rect x="3" y="9.6" width="4" height="3.4" rx="1.3" fill="#10e040"/>
</svg>
<div class="t" style="left:46px;top:44px;font-size:12px;line-height:12px;letter-spacing:-0.8px;color:#000;">halt</div>
<div style="position:absolute;left:0;top:0;width:142px;height:164px;box-shadow: inset 1px 1px 0 #4a4a4a, inset -1px -1px 0 #ffffff, inset -2px -2px 0 #ffffff;"></div>
</div>
<div style="position:absolute;left:309px;top:115px;width:141px;height:164px;background:#fff;overflow:hidden;">
<div style="position:absolute;left:1px;top:1px;width:139px;height:21px;background:#dcdcdc;"></div>
<div style="position:absolute;left:1px;top:1px;width:24px;height:21px;background:linear-gradient(#f0f0f0,#d4d4d4);box-shadow: inset 1px 1px 0 #fff, inset -1px -1px 0 #a8a8a8;"></div>
<div class="t" style="left:5px;top:6px;font-size:12px;line-height:12px;letter-spacing:-0.2px;color:#000;">Nr</div>
<div style="position:absolute;left:25px;top:1px;width:21px;height:21px;background:linear-gradient(#f0f0f0,#d4d4d4);box-shadow: inset 1px 1px 0 #fff, inset -1px -1px 0 #a8a8a8;"></div>
<div style="position:absolute;left:46px;top:1px;width:53px;height:21px;background:linear-gradient(#f0f0f0,#d4d4d4);box-shadow: inset 1px 1px 0 #fff, inset -1px -1px 0 #a8a8a8;"></div>
<div class="t" style="left:50px;top:6px;font-size:12px;line-height:12px;letter-spacing:-0.2px;color:#000;">Name</div>
<div class="t" style="left:2.7px;top:26px;font-size:11px;line-height:11px;color:#000;transform:scaleX(0.8);transform-origin:0 0;-webkit-text-stroke:0.15px #000;">0</div>
<div class="t" style="left:9.7px;top:26px;font-size:11px;line-height:11px;color:#000;transform:scaleX(0.8);transform-origin:0 0;-webkit-text-stroke:0.15px #000;">9</div>
<svg style="position:absolute;left:29px;top:23px" width="10" height="16" viewBox="0 0 10 16">
<path d="M3 0.6 H7 L9.4 3 V13 L7 15.4 H3 L0.6 13 V3 Z" fill="#d8d8dc" stroke="#000" stroke-width="1.1"/>
<path d="M2 3.5 V12.5" stroke="#f4f4f4" stroke-width="1"/>
<path d="M2.6 7.6 Q5 9.2 7.4 7.6" stroke="#f0c0c0" stroke-width="1.2" fill="none"/>
<path d="M2.6 13.1 Q5 14.6 7.4 13.1" stroke="#c0ffc8" stroke-width="1.1" fill="none"/>
<rect x="3" y="4" width="4" height="3.6" rx="1.3" fill="#800000"/>
<rect x="3" y="9.6" width="4" height="3.4" rx="1.3" fill="#10e040"/>
</svg>
<div class="t" style="left:46px;top:26px;font-size:12px;line-height:12px;letter-spacing:-0.3px;color:#000;">sound</div>
<div class="t" style="left:2.7px;top:44px;font-size:11px;line-height:11px;color:#000;transform:scaleX(0.8);transform-origin:0 0;-webkit-text-stroke:0.15px #000;">1</div>
<div class="t" style="left:9.7px;top:44px;font-size:11px;line-height:11px;color:#000;transform:scaleX(0.8);transform-origin:0 0;-webkit-text-stroke:0.15px #000;">0</div>
<svg style="position:absolute;left:29px;top:41px" width="10" height="16" viewBox="0 0 10 16">
<path d="M3 0.6 H7 L9.4 3 V13 L7 15.4 H3 L0.6 13 V3 Z" fill="#d8d8dc" stroke="#000" stroke-width="1.1"/>
<path d="M2 3.5 V12.5" stroke="#f4f4f4" stroke-width="1"/>
<path d="M2.6 7.6 Q5 9.2 7.4 7.6" stroke="#f0c0c0" stroke-width="1.2" fill="none"/>
<path d="M2.6 13.1 Q5 14.6 7.4 13.1" stroke="#c0ffc8" stroke-width="1.1" fill="none"/>
<rect x="3" y="4" width="4" height="3.6" rx="1.3" fill="#800000"/>
<rect x="3" y="9.6" width="4" height="3.4" rx="1.3" fill="#10e040"/>
</svg>
<div class="t" style="left:46px;top:44px;font-size:12px;line-height:12px;letter-spacing:-0.2px;color:#000;">network</div>
<div class="t" style="left:2.7px;top:62px;font-size:11px;line-height:11px;color:#000;transform:scaleX(0.8);transform-origin:0 0;-webkit-text-stroke:0.15px #000;">1</div>
<div class="t" style="left:9.7px;top:62px;font-size:11px;line-height:11px;color:#000;transform:scaleX(0.8);transform-origin:0 0;-webkit-text-stroke:0.15px #000;">5</div>
<svg style="position:absolute;left:29px;top:59px" width="10" height="16" viewBox="0 0 10 16">
<path d="M3 0.6 H7 L9.4 3 V13 L7 15.4 H3 L0.6 13 V3 Z" fill="#d8d8dc" stroke="#000" stroke-width="1.1"/>
<path d="M2 3.5 V12.5" stroke="#f4f4f4" stroke-width="1"/>
<path d="M2.6 7.6 Q5 9.2 7.4 7.6" stroke="#f0c0c0" stroke-width="1.2" fill="none"/>
<path d="M2.6 13.1 Q5 14.6 7.4 13.1" stroke="#c0ffc8" stroke-width="1.1" fill="none"/>
<rect x="3" y="4" width="4" height="3.6" rx="1.3" fill="#800000"/>
<rect x="3" y="9.6" width="4" height="3.4" rx="1.3" fill="#10e040"/>
</svg>
<div class="t" style="left:46px;top:62px;font-size:12px;line-height:12px;letter-spacing:-0.3px;color:#000;">random</div>
<div class="t" style="left:2.7px;top:80px;font-size:11px;line-height:11px;color:#000;transform:scaleX(0.8);transform-origin:0 0;-webkit-text-stroke:0.15px #000;">3</div>
<div class="t" style="left:9.7px;top:80px;font-size:11px;line-height:11px;color:#000;transform:scaleX(0.8);transform-origin:0 0;-webkit-text-stroke:0.15px #000;">0</div>
<svg style="position:absolute;left:29px;top:77px" width="10" height="16" viewBox="0 0 10 16">
<path d="M3 0.6 H7 L9.4 3 V13 L7 15.4 H3 L0.6 13 V3 Z" fill="#d8d8dc" stroke="#000" stroke-width="1.1"/>
<path d="M2 3.5 V12.5" stroke="#f4f4f4" stroke-width="1"/>
<path d="M2.6 7.6 Q5 9.2 7.4 7.6" stroke="#f0c0c0" stroke-width="1.2" fill="none"/>
<path d="M2.6 13.1 Q5 14.6 7.4 13.1" stroke="#c0ffc8" stroke-width="1.1" fill="none"/>
<rect x="3" y="4" width="4" height="3.6" rx="1.3" fill="#800000"/>
<rect x="3" y="9.6" width="4" height="3.4" rx="1.3" fill="#10e040"/>
</svg>
<div class="t" style="left:46px;top:80px;font-size:12px;line-height:12px;letter-spacing:-0.4px;color:#000;">syslog</div>
<div class="t" style="left:2.7px;top:98px;font-size:11px;line-height:11px;color:#000;transform:scaleX(0.8);transform-origin:0 0;-webkit-text-stroke:0.15px #000;">4</div>
<div class="t" style="left:9.7px;top:98px;font-size:11px;line-height:11px;color:#000;transform:scaleX(0.8);transform-origin:0 0;-webkit-text-stroke:0.15px #000;">0</div>
<svg style="position:absolute;left:29px;top:95px" width="10" height="16" viewBox="0 0 10 16">
<path d="M3 0.6 H7 L9.4 3 V13 L7 15.4 H3 L0.6 13 V3 Z" fill="#d8d8dc" stroke="#000" stroke-width="1.1"/>
<path d="M2 3.5 V12.5" stroke="#f4f4f4" stroke-width="1"/>
<path d="M2.6 7.6 Q5 9.2 7.4 7.6" stroke="#f0c0c0" stroke-width="1.2" fill="none"/>
<path d="M2.6 13.1 Q5 14.6 7.4 13.1" stroke="#c0ffc8" stroke-width="1.1" fill="none"/>
<rect x="3" y="4" width="4" height="3.6" rx="1.3" fill="#800000"/>
<rect x="3" y="9.6" width="4" height="3.4" rx="1.3" fill="#10e040"/>
</svg>
<div class="t" style="left:46px;top:98px;font-size:12px;line-height:12px;letter-spacing:-0.3px;color:#000;">crond</div>
<div class="t" style="left:2.7px;top:116px;font-size:11px;line-height:11px;color:#000;transform:scaleX(0.8);transform-origin:0 0;-webkit-text-stroke:0.15px #000;">4</div>
<div class="t" style="left:9.7px;top:116px;font-size:11px;line-height:11px;color:#000;transform:scaleX(0.8);transform-origin:0 0;-webkit-text-stroke:0.15px #000;">4</div>
<svg style="position:absolute;left:29px;top:113px" width="10" height="16" viewBox="0 0 10 16">
<path d="M3 0.6 H7 L9.4 3 V13 L7 15.4 H3 L0.6 13 V3 Z" fill="#d8d8dc" stroke="#000" stroke-width="1.1"/>
<path d="M2 3.5 V12.5" stroke="#f4f4f4" stroke-width="1"/>
<path d="M2.6 7.6 Q5 9.2 7.4 7.6" stroke="#f0c0c0" stroke-width="1.2" fill="none"/>
<path d="M2.6 13.1 Q5 14.6 7.4 13.1" stroke="#c0ffc8" stroke-width="1.1" fill="none"/>
<rect x="3" y="4" width="4" height="3.6" rx="1.3" fill="#800000"/>
<rect x="3" y="9.6" width="4" height="3.4" rx="1.3" fill="#10e040"/>
</svg>
<div class="t" style="left:46px;top:116px;font-size:12px;line-height:12px;letter-spacing:-0.6px;color:#000;">dictd</div>
<div class="t" style="left:2.7px;top:134px;font-size:11px;line-height:11px;color:#000;transform:scaleX(0.8);transform-origin:0 0;-webkit-text-stroke:0.15px #000;">7</div>
<div class="t" style="left:9.7px;top:134px;font-size:11px;line-height:11px;color:#000;transform:scaleX(0.8);transform-origin:0 0;-webkit-text-stroke:0.15px #000;">5</div>
<svg style="position:absolute;left:29px;top:131px" width="10" height="16" viewBox="0 0 10 16">
<path d="M3 0.6 H7 L9.4 3 V13 L7 15.4 H3 L0.6 13 V3 Z" fill="#d8d8dc" stroke="#000" stroke-width="1.1"/>
<path d="M2 3.5 V12.5" stroke="#f4f4f4" stroke-width="1"/>
<path d="M2.6 7.6 Q5 9.2 7.4 7.6" stroke="#f0c0c0" stroke-width="1.2" fill="none"/>
<path d="M2.6 13.1 Q5 14.6 7.4 13.1" stroke="#c0ffc8" stroke-width="1.1" fill="none"/>
<rect x="3" y="4" width="4" height="3.6" rx="1.3" fill="#800000"/>
<rect x="3" y="9.6" width="4" height="3.4" rx="1.3" fill="#10e040"/>
</svg>
<div class="t" style="left:46px;top:134px;font-size:12px;line-height:12px;letter-spacing:-0.6px;color:#000;">keytable</div>
<div class="t" style="left:2.7px;top:152px;font-size:11px;line-height:11px;color:#000;transform:scaleX(0.8);transform-origin:0 0;-webkit-text-stroke:0.15px #000;">8</div>
<div class="t" style="left:9.7px;top:152px;font-size:11px;line-height:11px;color:#000;transform:scaleX(0.8);transform-origin:0 0;-webkit-text-stroke:0.15px #000;">5</div>
<svg style="position:absolute;left:29px;top:149px" width="10" height="16" viewBox="0 0 10 16">
<path d="M3 0.6 H7 L9.4 3 V13 L7 15.4 H3 L0.6 13 V3 Z" fill="#d8d8dc" stroke="#000" stroke-width="1.1"/>
<path d="M2 3.5 V12.5" stroke="#f4f4f4" stroke-width="1"/>
<path d="M2.6 7.6 Q5 9.2 7.4 7.6" stroke="#f0c0c0" stroke-width="1.2" fill="none"/>
<path d="M2.6 13.1 Q5 14.6 7.4 13.1" stroke="#c0ffc8" stroke-width="1.1" fill="none"/>
<rect x="3" y="4" width="4" height="3.6" rx="1.3" fill="#800000"/>
<rect x="3" y="9.6" width="4" height="3.4" rx="1.3" fill="#10e040"/>
</svg>
<div class="t" style="left:46px;top:152px;font-size:12px;line-height:12px;letter-spacing:-0.2px;color:#000;">gpm</div>
<div style="position:absolute;left:123px;top:1px;width:16px;height:161px;background:#cdcdcd;"></div>
<div style="position:absolute;left:123px;top:1px;width:1px;height:161px;background:#404040;"></div>
<div style="position:absolute;left:138px;top:1px;width:1px;height:161px;background:#404040;"></div>
<div style="position:absolute;left:123px;top:1px;width:16px;height:16px;background:linear-gradient(#f2f2f2,#dadada);box-shadow: inset 0 0 0 1px #404040, inset 2px 2px 0 #fff;"></div>
<svg style="position:absolute;left:127px;top:6px" width="8" height="5"><path d="M4 0 L8 4.5 L0 4.5 Z" fill="#000"/></svg>
<div style="position:absolute;left:123px;top:17px;width:16px;height:72px;background:linear-gradient(90deg,#fafafa,#e4e4e4);box-shadow: inset 0 0 0 1px #404040, inset 2px 2px 0 #fff;"></div>
<div style="position:absolute;left:126px;top:49px;width:10px;height:1px;background:#a0a0a0;"></div>
<div style="position:absolute;left:126px;top:52px;width:10px;height:1px;background:#a0a0a0;"></div>
<div style="position:absolute;left:126px;top:55px;width:10px;height:1px;background:#a0a0a0;"></div>
<div style="position:absolute;left:123px;top:130px;width:16px;height:16px;background:linear-gradient(#f2f2f2,#dadada);box-shadow: inset 0 0 0 1px #404040, inset 2px 2px 0 #fff;"></div>
<svg style="position:absolute;left:127px;top:135px" width="8" height="5"><path d="M4 0 L8 4.5 L0 4.5 Z" fill="#000"/></svg>
<div style="position:absolute;left:123px;top:146px;width:16px;height:16px;background:linear-gradient(#f2f2f2,#dadada);box-shadow: inset 0 0 0 1px #404040, inset 2px 2px 0 #fff;"></div>
<svg style="position:absolute;left:127px;top:152px" width="8" height="5"><path d="M0 0 L8 0 L4 4.5 Z" fill="#000"/></svg>
<div style="position:absolute;left:0;top:0;width:141px;height:164px;box-shadow: inset 1px 1px 0 #4a4a4a, inset -1px -1px 0 #ffffff, inset -2px -2px 0 #ffffff;"></div>
</div>
<div style="position:absolute;left:457px;top:115px;width:142px;height:164px;background:#fff;overflow:hidden;">
<div style="position:absolute;left:1px;top:1px;width:140px;height:21px;background:#dcdcdc;"></div>
<div style="position:absolute;left:1px;top:1px;width:24px;height:21px;background:linear-gradient(#f0f0f0,#d4d4d4);box-shadow: inset 1px 1px 0 #fff, inset -1px -1px 0 #a8a8a8;"></div>
<div class="t" style="left:5px;top:6px;font-size:12px;line-height:12px;letter-spacing:-0.2px;color:#000;">Nr</div>
<div style="position:absolute;left:25px;top:1px;width:21px;height:21px;background:linear-gradient(#f0f0f0,#d4d4d4);box-shadow: inset 1px 1px 0 #fff, inset -1px -1px 0 #a8a8a8;"></div>
<div style="position:absolute;left:46px;top:1px;width:53px;height:21px;background:linear-gradient(#f0f0f0,#d4d4d4);box-shadow: inset 1px 1px 0 #fff, inset -1px -1px 0 #a8a8a8;"></div>
<div class="t" style="left:50px;top:6px;font-size:12px;line-height:12px;letter-spacing:-0.2px;color:#000;">Name</div>
<div class="t" style="left:2.7px;top:24px;font-size:11px;line-height:11px;color:#000;transform:scaleX(0.8);transform-origin:0 0;-webkit-text-stroke:0.15px #000;">0</div>
<div class="t" style="left:9.7px;top:24px;font-size:11px;line-height:11px;color:#000;transform:scaleX(0.8);transform-origin:0 0;-webkit-text-stroke:0.15px #000;">9</div>
<svg style="position:absolute;left:29px;top:21px" width="10" height="16" viewBox="0 0 10 16">
<path d="M3 0.6 H7 L9.4 3 V13 L7 15.4 H3 L0.6 13 V3 Z" fill="#d8d8dc" stroke="#000" stroke-width="1.1"/>
<path d="M2 3.5 V12.5" stroke="#f4f4f4" stroke-width="1"/>
<path d="M2.6 7.6 Q5 9.2 7.4 7.6" stroke="#f0c0c0" stroke-width="1.2" fill="none"/>
<path d="M2.6 13.1 Q5 14.6 7.4 13.1" stroke="#c0ffc8" stroke-width="1.1" fill="none"/>
<rect x="3" y="4" width="4" height="3.6" rx="1.3" fill="#800000"/>
<rect x="3" y="9.6" width="4" height="3.4" rx="1.3" fill="#10e040"/>
</svg>
<div class="t" style="left:46px;top:24px;font-size:12px;line-height:12px;letter-spacing:-0.3px;color:#000;">sound</div>
<div class="t" style="left:2.7px;top:42px;font-size:11px;line-height:11px;color:#000;transform:scaleX(0.8);transform-origin:0 0;-webkit-text-stroke:0.15px #000;">1</div>
<div class="t" style="left:9.7px;top:42px;font-size:11px;line-height:11px;color:#000;transform:scaleX(0.8);transform-origin:0 0;-webkit-text-stroke:0.15px #000;">0</div>
<svg style="position:absolute;left:29px;top:39px" width="10" height="16" viewBox="0 0 10 16">
<path d="M3 0.6 H7 L9.4 3 V13 L7 15.4 H3 L0.6 13 V3 Z" fill="#d8d8dc" stroke="#000" stroke-width="1.1"/>
<path d="M2 3.5 V12.5" stroke="#f4f4f4" stroke-width="1"/>
<path d="M2.6 7.6 Q5 9.2 7.4 7.6" stroke="#f0c0c0" stroke-width="1.2" fill="none"/>
<path d="M2.6 13.1 Q5 14.6 7.4 13.1" stroke="#c0ffc8" stroke-width="1.1" fill="none"/>
<rect x="3" y="4" width="4" height="3.6" rx="1.3" fill="#800000"/>
<rect x="3" y="9.6" width="4" height="3.4" rx="1.3" fill="#10e040"/>
</svg>
<div class="t" style="left:46px;top:42px;font-size:12px;line-height:12px;letter-spacing:-0.2px;color:#000;">network</div>
<div class="t" style="left:2.7px;top:60px;font-size:11px;line-height:11px;color:#000;transform:scaleX(0.8);transform-origin:0 0;-webkit-text-stroke:0.15px #000;">1</div>
<div class="t" style="left:9.7px;top:60px;font-size:11px;line-height:11px;color:#000;transform:scaleX(0.8);transform-origin:0 0;-webkit-text-stroke:0.15px #000;">3</div>
<svg style="position:absolute;left:29px;top:57px" width="10" height="16" viewBox="0 0 10 16">
<path d="M3 0.6 H7 L9.4 3 V13 L7 15.4 H3 L0.6 13 V3 Z" fill="#d8d8dc" stroke="#000" stroke-width="1.1"/>
<path d="M2 3.5 V12.5" stroke="#f4f4f4" stroke-width="1"/>
<path d="M2.6 7.6 Q5 9.2 7.4 7.6" stroke="#f0c0c0" stroke-width="1.2" fill="none"/>
<path d="M2.6 13.1 Q5 14.6 7.4 13.1" stroke="#c0ffc8" stroke-width="1.1" fill="none"/>
<rect x="3" y="4" width="4" height="3.6" rx="1.3" fill="#800000"/>
<rect x="3" y="9.6" width="4" height="3.4" rx="1.3" fill="#10e040"/>
</svg>
<div class="t" style="left:46px;top:60px;font-size:12px;line-height:12px;letter-spacing:-0.2px;color:#000;">portmap</div>
<div class="t" style="left:2.7px;top:78px;font-size:11px;line-height:11px;color:#000;transform:scaleX(0.8);transform-origin:0 0;-webkit-text-stroke:0.15px #000;">1</div>
<div class="t" style="left:9.7px;top:78px;font-size:11px;line-height:11px;color:#000;transform:scaleX(0.8);transform-origin:0 0;-webkit-text-stroke:0.15px #000;">5</div>
<svg style="position:absolute;left:29px;top:75px" width="10" height="16" viewBox="0 0 10 16">
<path d="M3 0.6 H7 L9.4 3 V13 L7 15.4 H3 L0.6 13 V3 Z" fill="#d8d8dc" stroke="#000" stroke-width="1.1"/>
<path d="M2 3.5 V12.5" stroke="#f4f4f4" stroke-width="1"/>
<path d="M2.6 7.6 Q5 9.2 7.4 7.6" stroke="#f0c0c0" stroke-width="1.2" fill="none"/>
<path d="M2.6 13.1 Q5 14.6 7.4 13.1" stroke="#c0ffc8" stroke-width="1.1" fill="none"/>
<rect x="3" y="4" width="4" height="3.6" rx="1.3" fill="#800000"/>
<rect x="3" y="9.6" width="4" height="3.4" rx="1.3" fill="#10e040"/>
</svg>
<div class="t" style="left:46px;top:78px;font-size:12px;line-height:12px;letter-spacing:-0.3px;color:#000;">random</div>
<div class="t" style="left:2.7px;top:96px;font-size:11px;line-height:11px;color:#000;transform:scaleX(0.8);transform-origin:0 0;-webkit-text-stroke:0.15px #000;">3</div>
<div class="t" style="left:9.7px;top:96px;font-size:11px;line-height:11px;color:#000;transform:scaleX(0.8);transform-origin:0 0;-webkit-text-stroke:0.15px #000;">0</div>
<svg style="position:absolute;left:29px;top:93px" width="10" height="16" viewBox="0 0 10 16">
<path d="M3 0.6 H7 L9.4 3 V13 L7 15.4 H3 L0.6 13 V3 Z" fill="#d8d8dc" stroke="#000" stroke-width="1.1"/>
<path d="M2 3.5 V12.5" stroke="#f4f4f4" stroke-width="1"/>
<path d="M2.6 7.6 Q5 9.2 7.4 7.6" stroke="#f0c0c0" stroke-width="1.2" fill="none"/>
<path d="M2.6 13.1 Q5 14.6 7.4 13.1" stroke="#c0ffc8" stroke-width="1.1" fill="none"/>
<rect x="3" y="4" width="4" height="3.6" rx="1.3" fill="#800000"/>
<rect x="3" y="9.6" width="4" height="3.4" rx="1.3" fill="#10e040"/>
</svg>
<div class="t" style="left:46px;top:96px;font-size:12px;line-height:12px;letter-spacing:-0.4px;color:#000;">syslog</div>
<div style="position:absolute;left:1px;top:110px;width:98px;height:18px;background:#4c6aa4;outline:1px dotted #c0c8e0;outline-offset:-1px"></div>
<div class="t" style="left:2.7px;top:114px;font-size:11px;line-height:11px;color:#fff;transform:scaleX(0.8);transform-origin:0 0;-webkit-text-stroke:0.15px #fff;">4</div>
<div class="t" style="left:9.7px;top:114px;font-size:11px;line-height:11px;color:#fff;transform:scaleX(0.8);transform-origin:0 0;-webkit-text-stroke:0.15px #fff;">0</div>
<svg style="position:absolute;left:29px;top:111px" width="10" height="16" viewBox="0 0 10 16">
<path d="M3 0.6 H7 L9.4 3 V13 L7 15.4 H3 L0.6 13 V3 Z" fill="#d8d8dc" stroke="#000" stroke-width="1.1"/>
<path d="M2 3.5 V12.5" stroke="#f4f4f4" stroke-width="1"/>
<path d="M2.6 7.6 Q5 9.2 7.4 7.6" stroke="#f0c0c0" stroke-width="1.2" fill="none"/>
<path d="M2.6 13.1 Q5 14.6 7.4 13.1" stroke="#c0ffc8" stroke-width="1.1" fill="none"/>
<rect x="3" y="4" width="4" height="3.6" rx="1.3" fill="#800000"/>
<rect x="3" y="9.6" width="4" height="3.4" rx="1.3" fill="#10e040"/>
</svg>
<div class="t" style="left:46px;top:114px;font-size:12px;line-height:12px;letter-spacing:-0.3px;color:#fff;">crond</div>
<div class="t" style="left:2.7px;top:132px;font-size:11px;line-height:11px;color:#000;transform:scaleX(0.8);transform-origin:0 0;-webkit-text-stroke:0.15px #000;">4</div>
<div class="t" style="left:9.7px;top:132px;font-size:11px;line-height:11px;color:#000;transform:scaleX(0.8);transform-origin:0 0;-webkit-text-stroke:0.15px #000;">4</div>
<svg style="position:absolute;left:29px;top:129px" width="10" height="16" viewBox="0 0 10 16">
<path d="M3 0.6 H7 L9.4 3 V13 L7 15.4 H3 L0.6 13 V3 Z" fill="#d8d8dc" stroke="#000" stroke-width="1.1"/>
<path d="M2 3.5 V12.5" stroke="#f4f4f4" stroke-width="1"/>
<path d="M2.6 7.6 Q5 9.2 7.4 7.6" stroke="#f0c0c0" stroke-width="1.2" fill="none"/>
<path d="M2.6 13.1 Q5 14.6 7.4 13.1" stroke="#c0ffc8" stroke-width="1.1" fill="none"/>
<rect x="3" y="4" width="4" height="3.6" rx="1.3" fill="#800000"/>
<rect x="3" y="9.6" width="4" height="3.4" rx="1.3" fill="#10e040"/>
</svg>
<div class="t" style="left:46px;top:132px;font-size:12px;line-height:12px;letter-spacing:-0.6px;color:#000;">dictd</div>
<div class="t" style="left:2.7px;top:150px;font-size:11px;line-height:11px;color:#000;transform:scaleX(0.8);transform-origin:0 0;-webkit-text-stroke:0.15px #000;">5</div>
<div class="t" style="left:9.7px;top:150px;font-size:11px;line-height:11px;color:#000;transform:scaleX(0.8);transform-origin:0 0;-webkit-text-stroke:0.15px #000;">0</div>
<svg style="position:absolute;left:29px;top:147px" width="10" height="16" viewBox="0 0 10 16">
<path d="M3 0.6 H7 L9.4 3 V13 L7 15.4 H3 L0.6 13 V3 Z" fill="#d8d8dc" stroke="#000" stroke-width="1.1"/>
<path d="M2 3.5 V12.5" stroke="#f4f4f4" stroke-width="1"/>
<path d="M2.6 7.6 Q5 9.2 7.4 7.6" stroke="#f0c0c0" stroke-width="1.2" fill="none"/>
<path d="M2.6 13.1 Q5 14.6 7.4 13.1" stroke="#c0ffc8" stroke-width="1.1" fill="none"/>
<rect x="3" y="4" width="4" height="3.6" rx="1.3" fill="#800000"/>
<rect x="3" y="9.6" width="4" height="3.4" rx="1.3" fill="#10e040"/>
</svg>
<div class="t" style="left:46px;top:150px;font-size:12px;line-height:12px;letter-spacing:-0.5px;color:#000;">xinetd</div>
<div style="position:absolute;left:124px;top:1px;width:16px;height:161px;background:#cdcdcd;"></div>
<div style="position:absolute;left:124px;top:1px;width:1px;height:161px;background:#404040;"></div>
<div style="position:absolute;left:139px;top:1px;width:1px;height:161px;background:#404040;"></div>
<div style="position:absolute;left:124px;top:1px;width:16px;height:16px;background:linear-gradient(#f2f2f2,#dadada);box-shadow: inset 0 0 0 1px #404040, inset 2px 2px 0 #fff;"></div>
<svg style="position:absolute;left:128px;top:6px" width="8" height="5"><path d="M4 0 L8 4.5 L0 4.5 Z" fill="#000"/></svg>
<div style="position:absolute;left:124px;top:24px;width:16px;height:51px;background:linear-gradient(90deg,#fafafa,#e4e4e4);box-shadow: inset 0 0 0 1px #404040, inset 2px 2px 0 #fff;"></div>
<div style="position:absolute;left:127px;top:45px;width:10px;height:1px;background:#a0a0a0;"></div>
<div style="position:absolute;left:127px;top:48px;width:10px;height:1px;background:#a0a0a0;"></div>
<div style="position:absolute;left:127px;top:51px;width:10px;height:1px;background:#a0a0a0;"></div>
<div style="position:absolute;left:124px;top:130px;width:16px;height:16px;background:linear-gradient(#f2f2f2,#dadada);box-shadow: inset 0 0 0 1px #404040, inset 2px 2px 0 #fff;"></div>
<svg style="position:absolute;left:128px;top:135px" width="8" height="5"><path d="M4 0 L8 4.5 L0 4.5 Z" fill="#000"/></svg>
<div style="position:absolute;left:124px;top:146px;width:16px;height:16px;background:linear-gradient(#f2f2f2,#dadada);box-shadow: inset 0 0 0 1px #404040, inset 2px 2px 0 #fff;"></div>
<svg style="position:absolute;left:128px;top:152px" width="8" height="5"><path d="M0 0 L8 0 L4 4.5 Z" fill="#000"/></svg>
<div style="position:absolute;left:0;top:0;width:142px;height:164px;box-shadow: inset 1px 1px 0 #4a4a4a, inset -1px -1px 0 #ffffff, inset -2px -2px 0 #ffffff;"></div>
</div>
<div style="position:absolute;left:606px;top:115px;width:142px;height:164px;background:#fff;overflow:hidden;">
<div style="position:absolute;left:1px;top:1px;width:140px;height:21px;background:#dcdcdc;"></div>
<div style="position:absolute;left:1px;top:1px;width:24px;height:21px;background:linear-gradient(#f0f0f0,#d4d4d4);box-shadow: inset 1px 1px 0 #fff, inset -1px -1px 0 #a8a8a8;"></div>
<div class="t" style="left:5px;top:6px;font-size:12px;line-height:12px;letter-spacing:-0.2px;color:#000;">Nr</div>
<div style="position:absolute;left:25px;top:1px;width:21px;height:21px;background:linear-gradient(#f0f0f0,#d4d4d4);box-shadow: inset 1px 1px 0 #fff, inset -1px -1px 0 #a8a8a8;"></div>
<div style="position:absolute;left:46px;top:1px;width:41px;height:21px;background:linear-gradient(#f0f0f0,#d4d4d4);box-shadow: inset 1px 1px 0 #fff, inset -1px -1px 0 #a8a8a8;"></div>
<div class="t" style="left:50px;top:6px;font-size:12px;line-height:12px;letter-spacing:-0.2px;color:#000;">Name</div>
<div class="t" style="left:2.7px;top:26px;font-size:11px;line-height:11px;color:#000;transform:scaleX(0.8);transform-origin:0 0;-webkit-text-stroke:0.15px #000;">0</div>
<div class="t" style="left:9.7px;top:26px;font-size:11px;line-height:11px;color:#000;transform:scaleX(0.8);transform-origin:0 0;-webkit-text-stroke:0.15px #000;">0</div>
<svg style="position:absolute;left:29px;top:23px" width="10" height="16" viewBox="0 0 10 16">
<path d="M3 0.6 H7 L9.4 3 V13 L7 15.4 H3 L0.6 13 V3 Z" fill="#d8d8dc" stroke="#000" stroke-width="1.1"/>
<path d="M2 3.5 V12.5" stroke="#f4f4f4" stroke-width="1"/>
<path d="M2.6 7.6 Q5 9.2 7.4 7.6" stroke="#f0c0c0" stroke-width="1.2" fill="none"/>
<path d="M2.6 13.1 Q5 14.6 7.4 13.1" stroke="#c0ffc8" stroke-width="1.1" fill="none"/>
<rect x="3" y="4" width="4" height="3.6" rx="1.3" fill="#800000"/>
<rect x="3" y="9.6" width="4" height="3.4" rx="1.3" fill="#10e040"/>
</svg>
<div class="t" style="left:46px;top:26px;font-size:12px;line-height:12px;letter-spacing:-1.0px;color:#000;">killall</div>
<div class="t" style="left:2.7px;top:44px;font-size:11px;line-height:11px;color:#000;transform:scaleX(0.8);transform-origin:0 0;-webkit-text-stroke:0.15px #000;">0</div>
<div class="t" style="left:9.7px;top:44px;font-size:11px;line-height:11px;color:#000;transform:scaleX(0.8);transform-origin:0 0;-webkit-text-stroke:0.15px #000;">1</div>
<svg style="position:absolute;left:29px;top:41px" width="10" height="16" viewBox="0 0 10 16">
<path d="M3 0.6 H7 L9.4 3 V13 L7 15.4 H3 L0.6 13 V3 Z" fill="#d8d8dc" stroke="#000" stroke-width="1.1"/>
<path d="M2 3.5 V12.5" stroke="#f4f4f4" stroke-width="1"/>
<path d="M2.6 7.6 Q5 9.2 7.4 7.6" stroke="#f0c0c0" stroke-width="1.2" fill="none"/>
<path d="M2.6 13.1 Q5 14.6 7.4 13.1" stroke="#c0ffc8" stroke-width="1.1" fill="none"/>
<rect x="3" y="4" width="4" height="3.6" rx="1.3" fill="#800000"/>
<rect x="3" y="9.6" width="4" height="3.4" rx="1.3" fill="#10e040"/>
</svg>
<div class="t" style="left:46px;top:44px;font-size:12px;line-height:12px;letter-spacing:-0.2px;color:#000;">reboot</div>
<div style="position:absolute;left:0;top:0;width:142px;height:164px;box-shadow: inset 1px 1px 0 #4a4a4a, inset -1px -1px 0 #ffffff, inset -2px -2px 0 #ffffff;"></div>
</div>
<div style="position:absolute;left:160px;top:301px;width:142px;height:171px;background:#fff;overflow:hidden;">
<div style="position:absolute;left:1px;top:1px;width:140px;height:21px;background:#dcdcdc;"></div>
<div style="position:absolute;left:1px;top:1px;width:24px;height:21px;background:linear-gradient(#f0f0f0,#d4d4d4);box-shadow: inset 1px 1px 0 #fff, inset -1px -1px 0 #a8a8a8;"></div>
<div class="t" style="left:5px;top:6px;font-size:12px;line-height:12px;letter-spacing:-0.2px;color:#000;">Nr</div>
<div style="position:absolute;left:25px;top:1px;width:21px;height:21px;background:linear-gradient(#f0f0f0,#d4d4d4);box-shadow: inset 1px 1px 0 #fff, inset -1px -1px 0 #a8a8a8;"></div>
<div style="position:absolute;left:46px;top:1px;width:53px;height:21px;background:linear-gradient(#f0f0f0,#d4d4d4);box-shadow: inset 1px 1px 0 #fff, inset -1px -1px 0 #a8a8a8;"></div>
<div class="t" style="left:50px;top:6px;font-size:12px;line-height:12px;letter-spacing:-0.2px;color:#000;">Name</div>
<div class="t" style="left:2.7px;top:26px;font-size:11px;line-height:11px;color:#000;transform:scaleX(0.8);transform-origin:0 0;-webkit-text-stroke:0.15px #000;">0</div>
<div class="t" style="left:9.7px;top:26px;font-size:11px;line-height:11px;color:#000;transform:scaleX(0.8);transform-origin:0 0;-webkit-text-stroke:0.15px #000;">0</div>
<svg style="position:absolute;left:29px;top:23px" width="10" height="16" viewBox="0 0 10 16">
<path d="M3 0.6 H7 L9.4 3 V13 L7 15.4 H3 L0.6 13 V3 Z" fill="#d8d8dc" stroke="#000" stroke-width="1.1"/>
<path d="M2 3.5 V12.5" stroke="#f4f4f4" stroke-width="1"/>
<path d="M2.6 7.6 Q5 9.2 7.4 7.6" stroke="#ffd8d8" stroke-width="1.2" fill="none"/>
<path d="M2.6 13.1 Q5 14.6 7.4 13.1" stroke="#d0f0d0" stroke-width="1.1" fill="none"/>
<rect x="3" y="4" width="4" height="3.6" rx="1.3" fill="#e81818"/>
<rect x="3" y="9.6" width="4" height="3.4" rx="1.3" fill="#007818"/>
</svg>
<div class="t" style="left:46px;top:26px;font-size:12px;line-height:12px;letter-spacing:-0.2px;color:#000;">linuxconf</div>
<div class="t" style="left:2.7px;top:44px;font-size:11px;line-height:11px;color:#000;transform:scaleX(0.8);transform-origin:0 0;-webkit-text-stroke:0.15px #000;">0</div>
<div class="t" style="left:9.7px;top:44px;font-size:11px;line-height:11px;color:#000;transform:scaleX(0.8);transform-origin:0 0;-webkit-text-stroke:0.15px #000;">5</div>
<svg style="position:absolute;left:29px;top:41px" width="10" height="16" viewBox="0 0 10 16">
<path d="M3 0.6 H7 L9.4 3 V13 L7 15.4 H3 L0.6 13 V3 Z" fill="#d8d8dc" stroke="#000" stroke-width="1.1"/>
<path d="M2 3.5 V12.5" stroke="#f4f4f4" stroke-width="1"/>
<path d="M2.6 7.6 Q5 9.2 7.4 7.6" stroke="#ffd8d8" stroke-width="1.2" fill="none"/>
<path d="M2.6 13.1 Q5 14.6 7.4 13.1" stroke="#d0f0d0" stroke-width="1.1" fill="none"/>
<rect x="3" y="4" width="4" height="3.6" rx="1.3" fill="#e81818"/>
<rect x="3" y="9.6" width="4" height="3.4" rx="1.3" fill="#007818"/>
</svg>
<div class="t" style="left:46px;top:44px;font-size:12px;line-height:12px;letter-spacing:-0.6px;color:#000;">keytable</div>
<div class="t" style="left:2.7px;top:62px;font-size:11px;line-height:11px;color:#000;transform:scaleX(0.8);transform-origin:0 0;-webkit-text-stroke:0.15px #000;">1</div>
<div class="t" style="left:9.7px;top:62px;font-size:11px;line-height:11px;color:#000;transform:scaleX(0.8);transform-origin:0 0;-webkit-text-stroke:0.15px #000;">0</div>
<svg style="position:absolute;left:29px;top:59px" width="10" height="16" viewBox="0 0 10 16">
<path d="M3 0.6 H7 L9.4 3 V13 L7 15.4 H3 L0.6 13 V3 Z" fill="#d8d8dc" stroke="#000" stroke-width="1.1"/>
<path d="M2 3.5 V12.5" stroke="#f4f4f4" stroke-width="1"/>
<path d="M2.6 7.6 Q5 9.2 7.4 7.6" stroke="#ffd8d8" stroke-width="1.2" fill="none"/>
<path d="M2.6 13.1 Q5 14.6 7.4 13.1" stroke="#d0f0d0" stroke-width="1.1" fill="none"/>
<rect x="3" y="4" width="4" height="3.6" rx="1.3" fill="#e81818"/>
<rect x="3" y="9.6" width="4" height="3.4" rx="1.3" fill="#007818"/>
</svg>
<div class="t" style="left:46px;top:62px;font-size:12px;line-height:12px;letter-spacing:-0.2px;color:#000;">xfs</div>
<div class="t" style="left:2.7px;top:80px;font-size:11px;line-height:11px;color:#000;transform:scaleX(0.8);transform-origin:0 0;-webkit-text-stroke:0.15px #000;">1</div>
<div class="t" style="left:9.7px;top:80px;font-size:11px;line-height:11px;color:#000;transform:scaleX(0.8);transform-origin:0 0;-webkit-text-stroke:0.15px #000;">1</div>
<svg style="position:absolute;left:29px;top:77px" width="10" height="16" viewBox="0 0 10 16">
<path d="M3 0.6 H7 L9.4 3 V13 L7 15.4 H3 L0.6 13 V3 Z" fill="#d8d8dc" stroke="#000" stroke-width="1.1"/>
<path d="M2 3.5 V12.5" stroke="#f4f4f4" stroke-width="1"/>
<path d="M2.6 7.6 Q5 9.2 7.4 7.6" stroke="#ffd8d8" stroke-width="1.2" fill="none"/>
<path d="M2.6 13.1 Q5 14.6 7.4 13.1" stroke="#d0f0d0" stroke-width="1.1" fill="none"/>
<rect x="3" y="4" width="4" height="3.6" rx="1.3" fill="#e81818"/>
<rect x="3" y="9.6" width="4" height="3.4" rx="1.3" fill="#007818"/>
</svg>
<div class="t" style="left:46px;top:80px;font-size:12px;line-height:12px;letter-spacing:-0.5px;color:#000;">drakfont</div>
<div class="t" style="left:2.7px;top:98px;font-size:11px;line-height:11px;color:#000;transform:scaleX(0.8);transform-origin:0 0;-webkit-text-stroke:0.15px #000;">1</div>
<div class="t" style="left:9.7px;top:98px;font-size:11px;line-height:11px;color:#000;transform:scaleX(0.8);transform-origin:0 0;-webkit-text-stroke:0.15px #000;">5</div>
<svg style="position:absolute;left:29px;top:95px" width="10" height="16" viewBox="0 0 10 16">
<path d="M3 0.6 H7 L9.4 3 V13 L7 15.4 H3 L0.6 13 V3 Z" fill="#d8d8dc" stroke="#000" stroke-width="1.1"/>
<path d="M2 3.5 V12.5" stroke="#f4f4f4" stroke-width="1"/>
<path d="M2.6 7.6 Q5 9.2 7.4 7.6" stroke="#ffd8d8" stroke-width="1.2" fill="none"/>
<path d="M2.6 13.1 Q5 14.6 7.4 13.1" stroke="#d0f0d0" stroke-width="1.1" fill="none"/>
<rect x="3" y="4" width="4" height="3.6" rx="1.3" fill="#e81818"/>
<rect x="3" y="9.6" width="4" height="3.4" rx="1.3" fill="#007818"/>
</svg>
<div class="t" style="left:46px;top:98px;font-size:12px;line-height:12px;letter-spacing:-0.2px;color:#000;">gpm</div>
<div class="t" style="left:2.7px;top:116px;font-size:11px;line-height:11px;color:#000;transform:scaleX(0.8);transform-origin:0 0;-webkit-text-stroke:0.15px #000;">1</div>
<div class="t" style="left:9.7px;top:116px;font-size:11px;line-height:11px;color:#000;transform:scaleX(0.8);transform-origin:0 0;-webkit-text-stroke:0.15px #000;">5</div>
<svg style="position:absolute;left:29px;top:113px" width="10" height="16" viewBox="0 0 10 16">
<path d="M3 0.6 H7 L9.4 3 V13 L7 15.4 H3 L0.6 13 V3 Z" fill="#d8d8dc" stroke="#000" stroke-width="1.1"/>
<path d="M2 3.5 V12.5" stroke="#f4f4f4" stroke-width="1"/>
<path d="M2.6 7.6 Q5 9.2 7.4 7.6" stroke="#ffd8d8" stroke-width="1.2" fill="none"/>
<path d="M2.6 13.1 Q5 14.6 7.4 13.1" stroke="#d0f0d0" stroke-width="1.1" fill="none"/>
<rect x="3" y="4" width="4" height="3.6" rx="1.3" fill="#e81818"/>
<rect x="3" y="9.6" width="4" height="3.4" rx="1.3" fill="#007818"/>
</svg>
<div class="t" style="left:46px;top:116px;font-size:12px;line-height:12px;letter-spacing:-0.5px;color:#000;">numlock</div>
<div class="t" style="left:2.7px;top:134px;font-size:11px;line-height:11px;color:#000;transform:scaleX(0.8);transform-origin:0 0;-webkit-text-stroke:0.15px #000;">5</div>
<div class="t" style="left:9.7px;top:134px;font-size:11px;line-height:11px;color:#000;transform:scaleX(0.8);transform-origin:0 0;-webkit-text-stroke:0.15px #000;">0</div>
<svg style="position:absolute;left:29px;top:131px" width="10" height="16" viewBox="0 0 10 16">
<path d="M3 0.6 H7 L9.4 3 V13 L7 15.4 H3 L0.6 13 V3 Z" fill="#d8d8dc" stroke="#000" stroke-width="1.1"/>
<path d="M2 3.5 V12.5" stroke="#f4f4f4" stroke-width="1"/>
<path d="M2.6 7.6 Q5 9.2 7.4 7.6" stroke="#ffd8d8" stroke-width="1.2" fill="none"/>
<path d="M2.6 13.1 Q5 14.6 7.4 13.1" stroke="#d0f0d0" stroke-width="1.1" fill="none"/>
<rect x="3" y="4" width="4" height="3.6" rx="1.3" fill="#e81818"/>
<rect x="3" y="9.6" width="4" height="3.4" rx="1.3" fill="#007818"/>
</svg>
<div class="t" style="left:46px;top:134px;font-size:12px;line-height:12px;letter-spacing:-0.5px;color:#000;">xinetd</div>
<div class="t" style="left:2.7px;top:152px;font-size:11px;line-height:11px;color:#000;transform:scaleX(0.8);transform-origin:0 0;-webkit-text-stroke:0.15px #000;">5</div>
<div class="t" style="left:9.7px;top:152px;font-size:11px;line-height:11px;color:#000;transform:scaleX(0.8);transform-origin:0 0;-webkit-text-stroke:0.15px #000;">5</div>
<svg style="position:absolute;left:29px;top:149px" width="10" height="16" viewBox="0 0 10 16">
<path d="M3 0.6 H7 L9.4 3 V13 L7 15.4 H3 L0.6 13 V3 Z" fill="#d8d8dc" stroke="#000" stroke-width="1.1"/>
<path d="M2 3.5 V12.5" stroke="#f4f4f4" stroke-width="1"/>
<path d="M2.6 7.6 Q5 9.2 7.4 7.6" stroke="#ffd8d8" stroke-width="1.2" fill="none"/>
<path d="M2.6 13.1 Q5 14.6 7.4 13.1" stroke="#d0f0d0" stroke-width="1.1" fill="none"/>
<rect x="3" y="4" width="4" height="3.6" rx="1.3" fill="#e81818"/>
<rect x="3" y="9.6" width="4" height="3.4" rx="1.3" fill="#007818"/>
</svg>
<div class="t" style="left:46px;top:152px;font-size:12px;line-height:12px;letter-spacing:-0.6px;color:#000;">dictd</div>
<div class="t" style="left:2.7px;top:170px;font-size:11px;line-height:11px;color:#000;transform:scaleX(0.8);transform-origin:0 0;-webkit-text-stroke:0.15px #000;">7</div>
<div class="t" style="left:9.7px;top:170px;font-size:11px;line-height:11px;color:#000;transform:scaleX(0.8);transform-origin:0 0;-webkit-text-stroke:0.15px #000;">5</div>
<svg style="position:absolute;left:29px;top:167px" width="10" height="16" viewBox="0 0 10 16">
<path d="M3 0.6 H7 L9.4 3 V13 L7 15.4 H3 L0.6 13 V3 Z" fill="#d8d8dc" stroke="#000" stroke-width="1.1"/>
<path d="M2 3.5 V12.5" stroke="#f4f4f4" stroke-width="1"/>
<path d="M2.6 7.6 Q5 9.2 7.4 7.6" stroke="#ffd8d8" stroke-width="1.2" fill="none"/>
<path d="M2.6 13.1 Q5 14.6 7.4 13.1" stroke="#d0f0d0" stroke-width="1.1" fill="none"/>
<rect x="3" y="4" width="4" height="3.6" rx="1.3" fill="#e81818"/>
<rect x="3" y="9.6" width="4" height="3.4" rx="1.3" fill="#007818"/>
</svg>
<div class="t" style="left:46px;top:170px;font-size:12px;line-height:12px;letter-spacing:-0.3px;color:#000;">xx</div>
<div style="position:absolute;left:124px;top:1px;width:16px;height:168px;background:#cdcdcd;"></div>
<div style="position:absolute;left:124px;top:1px;width:1px;height:168px;background:#404040;"></div>
<div style="position:absolute;left:139px;top:1px;width:1px;height:168px;background:#404040;"></div>
<div style="position:absolute;left:124px;top:1px;width:16px;height:16px;background:linear-gradient(#f2f2f2,#dadada);box-shadow: inset 0 0 0 1px #404040, inset 2px 2px 0 #fff;"></div>
<svg style="position:absolute;left:128px;top:6px" width="8" height="5"><path d="M4 0 L8 4.5 L0 4.5 Z" fill="#000"/></svg>
<div style="position:absolute;left:124px;top:17px;width:16px;height:65px;background:linear-gradient(90deg,#fafafa,#e4e4e4);box-shadow: inset 0 0 0 1px #404040, inset 2px 2px 0 #fff;"></div>
<div style="position:absolute;left:127px;top:45px;width:10px;height:1px;background:#a0a0a0;"></div>
<div style="position:absolute;left:127px;top:48px;width:10px;height:1px;background:#a0a0a0;"></div>
<div style="position:absolute;left:127px;top:51px;width:10px;height:1px;background:#a0a0a0;"></div>
<div style="position:absolute;left:124px;top:137px;width:16px;height:16px;background:linear-gradient(#f2f2f2,#dadada);box-shadow: inset 0 0 0 1px #404040, inset 2px 2px 0 #fff;"></div>
<svg style="position:absolute;left:128px;top:142px" width="8" height="5"><path d="M4 0 L8 4.5 L0 4.5 Z" fill="#000"/></svg>
<div style="position:absolute;left:124px;top:153px;width:16px;height:16px;background:linear-gradient(#f2f2f2,#dadada);box-shadow: inset 0 0 0 1px #404040, inset 2px 2px 0 #fff;"></div>
<svg style="position:absolute;left:128px;top:159px" width="8" height="5"><path d="M0 0 L8 0 L4 4.5 Z" fill="#000"/></svg>
<div style="position:absolute;left:0;top:0;width:142px;height:171px;box-shadow: inset 1px 1px 0 #4a4a4a, inset -1px -1px 0 #ffffff, inset -2px -2px 0 #ffffff;"></div>
</div>
<div style="position:absolute;left:309px;top:301px;width:141px;height:171px;background:#fff;overflow:hidden;">
<div style="position:absolute;left:1px;top:1px;width:139px;height:21px;background:#dcdcdc;"></div>
<div style="position:absolute;left:1px;top:1px;width:24px;height:21px;background:linear-gradient(#f0f0f0,#d4d4d4);box-shadow: inset 1px 1px 0 #fff, inset -1px -1px 0 #a8a8a8;"></div>
<div class="t" style="left:5px;top:6px;font-size:12px;line-height:12px;letter-spacing:-0.2px;color:#000;">Nr</div>
<div style="position:absolute;left:25px;top:1px;width:21px;height:21px;background:linear-gradient(#f0f0f0,#d4d4d4);box-shadow: inset 1px 1px 0 #fff, inset -1px -1px 0 #a8a8a8;"></div>
<div style="position:absolute;left:46px;top:1px;width:49px;height:21px;background:linear-gradient(#f0f0f0,#d4d4d4);box-shadow: inset 1px 1px 0 #fff, inset -1px -1px 0 #a8a8a8;"></div>
<div class="t" style="left:50px;top:6px;font-size:12px;line-height:12px;letter-spacing:-0.2px;color:#000;">Name</div>
<div class="t" style="left:2.7px;top:26px;font-size:11px;line-height:11px;color:#000;transform:scaleX(0.8);transform-origin:0 0;-webkit-text-stroke:0.15px #000;">1</div>
<div class="t" style="left:9.7px;top:26px;font-size:11px;line-height:11px;color:#000;transform:scaleX(0.8);transform-origin:0 0;-webkit-text-stroke:0.15px #000;">5</div>
<svg style="position:absolute;left:29px;top:23px" width="10" height="16" viewBox="0 0 10 16">
<path d="M3 0.6 H7 L9.4 3 V13 L7 15.4 H3 L0.6 13 V3 Z" fill="#d8d8dc" stroke="#000" stroke-width="1.1"/>
<path d="M2 3.5 V12.5" stroke="#f4f4f4" stroke-width="1"/>
<path d="M2.6 7.6 Q5 9.2 7.4 7.6" stroke="#ffd8d8" stroke-width="1.2" fill="none"/>
<path d="M2.6 13.1 Q5 14.6 7.4 13.1" stroke="#d0f0d0" stroke-width="1.1" fill="none"/>
<rect x="3" y="4" width="4" height="3.6" rx="1.3" fill="#e81818"/>
<rect x="3" y="9.6" width="4" height="3.4" rx="1.3" fill="#007818"/>
</svg>
<div class="t" style="left:46px;top:26px;font-size:12px;line-height:12px;letter-spacing:-0.5px;color:#000;">numlock</div>
<div class="t" style="left:2.7px;top:44px;font-size:11px;line-height:11px;color:#000;transform:scaleX(0.8);transform-origin:0 0;-webkit-text-stroke:0.15px #000;">5</div>
<div class="t" style="left:9.7px;top:44px;font-size:11px;line-height:11px;color:#000;transform:scaleX(0.8);transform-origin:0 0;-webkit-text-stroke:0.15px #000;">0</div>
<svg style="position:absolute;left:29px;top:41px" width="10" height="16" viewBox="0 0 10 16">
<path d="M3 0.6 H7 L9.4 3 V13 L7 15.4 H3 L0.6 13 V3 Z" fill="#d8d8dc" stroke="#000" stroke-width="1.1"/>
<path d="M2 3.5 V12.5" stroke="#f4f4f4" stroke-width="1"/>
<path d="M2.6 7.6 Q5 9.2 7.4 7.6" stroke="#ffd8d8" stroke-width="1.2" fill="none"/>
<path d="M2.6 13.1 Q5 14.6 7.4 13.1" stroke="#d0f0d0" stroke-width="1.1" fill="none"/>
<rect x="3" y="4" width="4" height="3.6" rx="1.3" fill="#e81818"/>
<rect x="3" y="9.6" width="4" height="3.4" rx="1.3" fill="#007818"/>
</svg>
<div class="t" style="left:46px;top:44px;font-size:12px;line-height:12px;letter-spacing:-0.5px;color:#000;">xinetd</div>
<div class="t" style="left:2.7px;top:62px;font-size:11px;line-height:11px;color:#000;transform:scaleX(0.8);transform-origin:0 0;-webkit-text-stroke:0.15px #000;">8</div>
<div class="t" style="left:9.7px;top:62px;font-size:11px;line-height:11px;color:#000;transform:scaleX(0.8);transform-origin:0 0;-webkit-text-stroke:0.15px #000;">7</div>
<svg style="position:absolute;left:29px;top:59px" width="10" height="16" viewBox="0 0 10 16">
<path d="M3 0.6 H7 L9.4 3 V13 L7 15.4 H3 L0.6 13 V3 Z" fill="#d8d8dc" stroke="#000" stroke-width="1.1"/>
<path d="M2 3.5 V12.5" stroke="#f4f4f4" stroke-width="1"/>
<path d="M2.6 7.6 Q5 9.2 7.4 7.6" stroke="#ffd8d8" stroke-width="1.2" fill="none"/>
<path d="M2.6 13.1 Q5 14.6 7.4 13.1" stroke="#d0f0d0" stroke-width="1.1" fill="none"/>
<rect x="3" y="4" width="4" height="3.6" rx="1.3" fill="#e81818"/>
<rect x="3" y="9.6" width="4" height="3.4" rx="1.3" fill="#007818"/>
</svg>
<div class="t" style="left:46px;top:62px;font-size:12px;line-height:12px;letter-spacing:-0.2px;color:#000;">portmap</div>
<div class="t" style="left:2.7px;top:80px;font-size:11px;line-height:11px;color:#000;transform:scaleX(0.8);transform-origin:0 0;-webkit-text-stroke:0.15px #000;">9</div>
<div class="t" style="left:9.7px;top:80px;font-size:11px;line-height:11px;color:#000;transform:scaleX(0.8);transform-origin:0 0;-webkit-text-stroke:0.15px #000;">5</div>
<svg style="position:absolute;left:29px;top:77px" width="10" height="16" viewBox="0 0 10 16">
<path d="M3 0.6 H7 L9.4 3 V13 L7 15.4 H3 L0.6 13 V3 Z" fill="#d8d8dc" stroke="#000" stroke-width="1.1"/>
<path d="M2 3.5 V12.5" stroke="#f4f4f4" stroke-width="1"/>
<path d="M2.6 7.6 Q5 9.2 7.4 7.6" stroke="#ffd8d8" stroke-width="1.2" fill="none"/>
<path d="M2.6 13.1 Q5 14.6 7.4 13.1" stroke="#d0f0d0" stroke-width="1.1" fill="none"/>
<rect x="3" y="4" width="4" height="3.6" rx="1.3" fill="#e81818"/>
<rect x="3" y="9.6" width="4" height="3.4" rx="1.3" fill="#007818"/>
</svg>
<div class="t" style="left:46px;top:80px;font-size:12px;line-height:12px;letter-spacing:-0.3px;color:#000;">kudzu</div>
<div style="position:absolute;left:0;top:0;width:141px;height:171px;box-shadow: inset 1px 1px 0 #4a4a4a, inset -1px -1px 0 #ffffff, inset -2px -2px 0 #ffffff;"></div>
</div>
<div style="position:absolute;left:457px;top:301px;width:142px;height:171px;background:#fff;overflow:hidden;">
<div style="position:absolute;left:1px;top:1px;width:140px;height:21px;background:#dcdcdc;"></div>
<div style="position:absolute;left:1px;top:1px;width:24px;height:21px;background:linear-gradient(#f0f0f0,#d4d4d4);box-shadow: inset 1px 1px 0 #fff, inset -1px -1px 0 #a8a8a8;"></div>
<div class="t" style="left:5px;top:6px;font-size:12px;line-height:12px;letter-spacing:-0.2px;color:#000;">Nr</div>
<div style="position:absolute;left:25px;top:1px;width:12px;height:21px;background:linear-gradient(#f0f0f0,#d4d4d4);box-shadow: inset 1px 1px 0 #fff, inset -1px -1px 0 #a8a8a8;"></div>
<div style="position:absolute;left:37px;top:1px;width:41px;height:21px;background:linear-gradient(#f0f0f0,#d4d4d4);box-shadow: inset 1px 1px 0 #fff, inset -1px -1px 0 #a8a8a8;"></div>
<div class="t" style="left:41px;top:6px;font-size:12px;line-height:12px;letter-spacing:-0.2px;color:#000;">Name</div>
<div style="position:absolute;left:0;top:0;width:142px;height:171px;box-shadow: inset 1px 1px 0 #4a4a4a, inset -1px -1px 0 #ffffff, inset -2px -2px 0 #ffffff;"></div>
</div>
<div style="position:absolute;left:606px;top:301px;width:142px;height:171px;background:#fff;overflow:hidden;">
<div style="position:absolute;left:1px;top:1px;width:140px;height:21px;background:#dcdcdc;"></div>
<div style="position:absolute;left:1px;top:1px;width:24px;height:21px;background:linear-gradient(#f0f0f0,#d4d4d4);box-shadow: inset 1px 1px 0 #fff, inset -1px -1px 0 #a8a8a8;"></div>
<div class="t" style="left:5px;top:6px;font-size:12px;line-height:12px;letter-spacing:-0.2px;color:#000;">Nr</div>
<div style="position:absolute;left:25px;top:1px;width:21px;height:21px;background:linear-gradient(#f0f0f0,#d4d4d4);box-shadow: inset 1px 1px 0 #fff, inset -1px -1px 0 #a8a8a8;"></div>
<div style="position:absolute;left:46px;top:1px;width:53px;height:21px;background:linear-gradient(#f0f0f0,#d4d4d4);box-shadow: inset 1px 1px 0 #fff, inset -1px -1px 0 #a8a8a8;"></div>
<div class="t" style="left:50px;top:6px;font-size:12px;line-height:12px;letter-spacing:-0.2px;color:#000;">Name</div>
<div class="t" style="left:2.7px;top:26px;font-size:11px;line-height:11px;color:#000;transform:scaleX(0.8);transform-origin:0 0;-webkit-text-stroke:0.15px #000;">0</div>
<div class="t" style="left:9.7px;top:26px;font-size:11px;line-height:11px;color:#000;transform:scaleX(0.8);transform-origin:0 0;-webkit-text-stroke:0.15px #000;">0</div>
<svg style="position:absolute;left:29px;top:23px" width="10" height="16" viewBox="0 0 10 16">
<path d="M3 0.6 H7 L9.4 3 V13 L7 15.4 H3 L0.6 13 V3 Z" fill="#d8d8dc" stroke="#000" stroke-width="1.1"/>
<path d="M2 3.5 V12.5" stroke="#f4f4f4" stroke-width="1"/>
<path d="M2.6 7.6 Q5 9.2 7.4 7.6" stroke="#ffd8d8" stroke-width="1.2" fill="none"/>
<path d="M2.6 13.1 Q5 14.6 7.4 13.1" stroke="#d0f0d0" stroke-width="1.1" fill="none"/>
<rect x="3" y="4" width="4" height="3.6" rx="1.3" fill="#e81818"/>
<rect x="3" y="9.6" width="4" height="3.4" rx="1.3" fill="#007818"/>
</svg>
<div class="t" style="left:46px;top:26px;font-size:12px;line-height:12px;letter-spacing:-0.2px;color:#000;">linuxconf</div>
<div class="t" style="left:2.7px;top:44px;font-size:11px;line-height:11px;color:#000;transform:scaleX(0.8);transform-origin:0 0;-webkit-text-stroke:0.15px #000;">0</div>
<div class="t" style="left:9.7px;top:44px;font-size:11px;line-height:11px;color:#000;transform:scaleX(0.8);transform-origin:0 0;-webkit-text-stroke:0.15px #000;">5</div>
<svg style="position:absolute;left:29px;top:41px" width="10" height="16" viewBox="0 0 10 16">
<path d="M3 0.6 H7 L9.4 3 V13 L7 15.4 H3 L0.6 13 V3 Z" fill="#d8d8dc" stroke="#000" stroke-width="1.1"/>
<path d="M2 3.5 V12.5" stroke="#f4f4f4" stroke-width="1"/>
<path d="M2.6 7.6 Q5 9.2 7.4 7.6" stroke="#ffd8d8" stroke-width="1.2" fill="none"/>
<path d="M2.6 13.1 Q5 14.6 7.4 13.1" stroke="#d0f0d0" stroke-width="1.1" fill="none"/>
<rect x="3" y="4" width="4" height="3.6" rx="1.3" fill="#e81818"/>
<rect x="3" y="9.6" width="4" height="3.4" rx="1.3" fill="#007818"/>
</svg>
<div class="t" style="left:46px;top:44px;font-size:12px;line-height:12px;letter-spacing:-0.6px;color:#000;">keytable</div>
<div class="t" style="left:2.7px;top:62px;font-size:11px;line-height:11px;color:#000;transform:scaleX(0.8);transform-origin:0 0;-webkit-text-stroke:0.15px #000;">0</div>
<div class="t" style="left:9.7px;top:62px;font-size:11px;line-height:11px;color:#000;transform:scaleX(0.8);transform-origin:0 0;-webkit-text-stroke:0.15px #000;">8</div>
<svg style="position:absolute;left:29px;top:59px" width="10" height="16" viewBox="0 0 10 16">
<path d="M3 0.6 H7 L9.4 3 V13 L7 15.4 H3 L0.6 13 V3 Z" fill="#d8d8dc" stroke="#000" stroke-width="1.1"/>
<path d="M2 3.5 V12.5" stroke="#f4f4f4" stroke-width="1"/>
<path d="M2.6 7.6 Q5 9.2 7.4 7.6" stroke="#ffd8d8" stroke-width="1.2" fill="none"/>
<path d="M2.6 13.1 Q5 14.6 7.4 13.1" stroke="#d0f0d0" stroke-width="1.1" fill="none"/>
<rect x="3" y="4" width="4" height="3.6" rx="1.3" fill="#e81818"/>
<rect x="3" y="9.6" width="4" height="3.4" rx="1.3" fill="#007818"/>
</svg>
<div class="t" style="left:46px;top:62px;font-size:12px;line-height:12px;letter-spacing:-0.2px;color:#000;">vmware</div>
<div class="t" style="left:2.7px;top:80px;font-size:11px;line-height:11px;color:#000;transform:scaleX(0.8);transform-origin:0 0;-webkit-text-stroke:0.15px #000;">1</div>
<div class="t" style="left:9.7px;top:80px;font-size:11px;line-height:11px;color:#000;transform:scaleX(0.8);transform-origin:0 0;-webkit-text-stroke:0.15px #000;">0</div>
<svg style="position:absolute;left:29px;top:77px" width="10" height="16" viewBox="0 0 10 16">
<path d="M3 0.6 H7 L9.4 3 V13 L7 15.4 H3 L0.6 13 V3 Z" fill="#d8d8dc" stroke="#000" stroke-width="1.1"/>
<path d="M2 3.5 V12.5" stroke="#f4f4f4" stroke-width="1"/>
<path d="M2.6 7.6 Q5 9.2 7.4 7.6" stroke="#ffd8d8" stroke-width="1.2" fill="none"/>
<path d="M2.6 13.1 Q5 14.6 7.4 13.1" stroke="#d0f0d0" stroke-width="1.1" fill="none"/>
<rect x="3" y="4" width="4" height="3.6" rx="1.3" fill="#e81818"/>
<rect x="3" y="9.6" width="4" height="3.4" rx="1.3" fill="#007818"/>
</svg>
<div class="t" style="left:46px;top:80px;font-size:12px;line-height:12px;letter-spacing:-0.2px;color:#000;">xfs</div>
<div class="t" style="left:2.7px;top:98px;font-size:11px;line-height:11px;color:#000;transform:scaleX(0.8);transform-origin:0 0;-webkit-text-stroke:0.15px #000;">1</div>
<div class="t" style="left:9.7px;top:98px;font-size:11px;line-height:11px;color:#000;transform:scaleX(0.8);transform-origin:0 0;-webkit-text-stroke:0.15px #000;">1</div>
<svg style="position:absolute;left:29px;top:95px" width="10" height="16" viewBox="0 0 10 16">
<path d="M3 0.6 H7 L9.4 3 V13 L7 15.4 H3 L0.6 13 V3 Z" fill="#d8d8dc" stroke="#000" stroke-width="1.1"/>
<path d="M2 3.5 V12.5" stroke="#f4f4f4" stroke-width="1"/>
<path d="M2.6 7.6 Q5 9.2 7.4 7.6" stroke="#ffd8d8" stroke-width="1.2" fill="none"/>
<path d="M2.6 13.1 Q5 14.6 7.4 13.1" stroke="#d0f0d0" stroke-width="1.1" fill="none"/>
<rect x="3" y="4" width="4" height="3.6" rx="1.3" fill="#e81818"/>
<rect x="3" y="9.6" width="4" height="3.4" rx="1.3" fill="#007818"/>
</svg>
<div class="t" style="left:46px;top:98px;font-size:12px;line-height:12px;letter-spacing:-0.5px;color:#000;">drakfont</div>
<div class="t" style="left:2.7px;top:116px;font-size:11px;line-height:11px;color:#000;transform:scaleX(0.8);transform-origin:0 0;-webkit-text-stroke:0.15px #000;">1</div>
<div class="t" style="left:9.7px;top:116px;font-size:11px;line-height:11px;color:#000;transform:scaleX(0.8);transform-origin:0 0;-webkit-text-stroke:0.15px #000;">5</div>
<svg style="position:absolute;left:29px;top:113px" width="10" height="16" viewBox="0 0 10 16">
<path d="M3 0.6 H7 L9.4 3 V13 L7 15.4 H3 L0.6 13 V3 Z" fill="#d8d8dc" stroke="#000" stroke-width="1.1"/>
<path d="M2 3.5 V12.5" stroke="#f4f4f4" stroke-width="1"/>
<path d="M2.6 7.6 Q5 9.2 7.4 7.6" stroke="#ffd8d8" stroke-width="1.2" fill="none"/>
<path d="M2.6 13.1 Q5 14.6 7.4 13.1" stroke="#d0f0d0" stroke-width="1.1" fill="none"/>
<rect x="3" y="4" width="4" height="3.6" rx="1.3" fill="#e81818"/>
<rect x="3" y="9.6" width="4" height="3.4" rx="1.3" fill="#007818"/>
</svg>
<div class="t" style="left:46px;top:116px;font-size:12px;line-height:12px;letter-spacing:-0.2px;color:#000;">gpm</div>
<div class="t" style="left:2.7px;top:134px;font-size:11px;line-height:11px;color:#000;transform:scaleX(0.8);transform-origin:0 0;-webkit-text-stroke:0.15px #000;">1</div>
<div class="t" style="left:9.7px;top:134px;font-size:11px;line-height:11px;color:#000;transform:scaleX(0.8);transform-origin:0 0;-webkit-text-stroke:0.15px #000;">5</div>
<svg style="position:absolute;left:29px;top:131px" width="10" height="16" viewBox="0 0 10 16">
<path d="M3 0.6 H7 L9.4 3 V13 L7 15.4 H3 L0.6 13 V3 Z" fill="#d8d8dc" stroke="#000" stroke-width="1.1"/>
<path d="M2 3.5 V12.5" stroke="#f4f4f4" stroke-width="1"/>
<path d="M2.6 7.6 Q5 9.2 7.4 7.6" stroke="#ffd8d8" stroke-width="1.2" fill="none"/>
<path d="M2.6 13.1 Q5 14.6 7.4 13.1" stroke="#d0f0d0" stroke-width="1.1" fill="none"/>
<rect x="3" y="4" width="4" height="3.6" rx="1.3" fill="#e81818"/>
<rect x="3" y="9.6" width="4" height="3.4" rx="1.3" fill="#007818"/>
</svg>
<div class="t" style="left:46px;top:134px;font-size:12px;line-height:12px;letter-spacing:-0.5px;color:#000;">numlock</div>
<div class="t" style="left:2.7px;top:152px;font-size:11px;line-height:11px;color:#000;transform:scaleX(0.8);transform-origin:0 0;-webkit-text-stroke:0.15px #000;">5</div>
<div class="t" style="left:9.7px;top:152px;font-size:11px;line-height:11px;color:#000;transform:scaleX(0.8);transform-origin:0 0;-webkit-text-stroke:0.15px #000;">0</div>
<svg style="position:absolute;left:29px;top:149px" width="10" height="16" viewBox="0 0 10 16">
<path d="M3 0.6 H7 L9.4 3 V13 L7 15.4 H3 L0.6 13 V3 Z" fill="#d8d8dc" stroke="#000" stroke-width="1.1"/>
<path d="M2 3.5 V12.5" stroke="#f4f4f4" stroke-width="1"/>
<path d="M2.6 7.6 Q5 9.2 7.4 7.6" stroke="#ffd8d8" stroke-width="1.2" fill="none"/>
<path d="M2.6 13.1 Q5 14.6 7.4 13.1" stroke="#d0f0d0" stroke-width="1.1" fill="none"/>
<rect x="3" y="4" width="4" height="3.6" rx="1.3" fill="#e81818"/>
<rect x="3" y="9.6" width="4" height="3.4" rx="1.3" fill="#007818"/>
</svg>
<div class="t" style="left:46px;top:152px;font-size:12px;line-height:12px;letter-spacing:-0.5px;color:#000;">xinetd</div>
<div class="t" style="left:2.7px;top:170px;font-size:11px;line-height:11px;color:#000;transform:scaleX(0.8);transform-origin:0 0;-webkit-text-stroke:0.15px #000;">5</div>
<div class="t" style="left:9.7px;top:170px;font-size:11px;line-height:11px;color:#000;transform:scaleX(0.8);transform-origin:0 0;-webkit-text-stroke:0.15px #000;">5</div>
<svg style="position:absolute;left:29px;top:167px" width="10" height="16" viewBox="0 0 10 16">
<path d="M3 0.6 H7 L9.4 3 V13 L7 15.4 H3 L0.6 13 V3 Z" fill="#d8d8dc" stroke="#000" stroke-width="1.1"/>
<path d="M2 3.5 V12.5" stroke="#f4f4f4" stroke-width="1"/>
<path d="M2.6 7.6 Q5 9.2 7.4 7.6" stroke="#ffd8d8" stroke-width="1.2" fill="none"/>
<path d="M2.6 13.1 Q5 14.6 7.4 13.1" stroke="#d0f0d0" stroke-width="1.1" fill="none"/>
<rect x="3" y="4" width="4" height="3.6" rx="1.3" fill="#e81818"/>
<rect x="3" y="9.6" width="4" height="3.4" rx="1.3" fill="#007818"/>
</svg>
<div class="t" style="left:46px;top:170px;font-size:12px;line-height:12px;letter-spacing:-0.3px;color:#000;">xx</div>
<div style="position:absolute;left:124px;top:1px;width:16px;height:168px;background:#cdcdcd;"></div>
<div style="position:absolute;left:124px;top:1px;width:1px;height:168px;background:#404040;"></div>
<div style="position:absolute;left:139px;top:1px;width:1px;height:168px;background:#404040;"></div>
<div style="position:absolute;left:124px;top:1px;width:16px;height:16px;background:linear-gradient(#f2f2f2,#dadada);box-shadow: inset 0 0 0 1px #404040, inset 2px 2px 0 #fff;"></div>
<svg style="position:absolute;left:128px;top:6px" width="8" height="5"><path d="M4 0 L8 4.5 L0 4.5 Z" fill="#000"/></svg>
<div style="position:absolute;left:124px;top:17px;width:16px;height:61px;background:linear-gradient(90deg,#fafafa,#e4e4e4);box-shadow: inset 0 0 0 1px #404040, inset 2px 2px 0 #fff;"></div>
<div style="position:absolute;left:127px;top:43px;width:10px;height:1px;background:#a0a0a0;"></div>
<div style="position:absolute;left:127px;top:46px;width:10px;height:1px;background:#a0a0a0;"></div>
<div style="position:absolute;left:127px;top:49px;width:10px;height:1px;background:#a0a0a0;"></div>
<div style="position:absolute;left:124px;top:137px;width:16px;height:16px;background:linear-gradient(#f2f2f2,#dadada);box-shadow: inset 0 0 0 1px #404040, inset 2px 2px 0 #fff;"></div>
<svg style="position:absolute;left:128px;top:142px" width="8" height="5"><path d="M4 0 L8 4.5 L0 4.5 Z" fill="#000"/></svg>
<div style="position:absolute;left:124px;top:153px;width:16px;height:16px;background:linear-gradient(#f2f2f2,#dadada);box-shadow: inset 0 0 0 1px #404040, inset 2px 2px 0 #fff;"></div>
<svg style="position:absolute;left:128px;top:159px" width="8" height="5"><path d="M0 0 L8 0 L4 4.5 Z" fill="#000"/></svg>
<div style="position:absolute;left:0;top:0;width:142px;height:171px;box-shadow: inset 1px 1px 0 #4a4a4a, inset -1px -1px 0 #ffffff, inset -2px -2px 0 #ffffff;"></div>
</div>
<div style="position:absolute;left:3px;top:478px;width:751px;height:1px;background:#404040;"></div>
<div style="position:absolute;left:3px;top:479px;width:751px;height:4px;background:linear-gradient(#ffffff,#ffffff 40%,#d8d8d8);"></div>
<div style="position:absolute;left:3px;top:483px;width:751px;height:1px;background:#404040;"></div>
<div style="position:absolute;left:5px;top:485px;width:749px;height:103px;background:#fff;overflow:hidden;">
<div class="t" style="left:9px;top:-1px;font-size:12.5px;line-height:12.5px;color:#000;">**</div>
<div class="t" style="left:23px;top:-1px;font-size:12.5px;line-height:12.5px;color:#000;">Re</div>
<div style="position:absolute;left:40px;top:6px;width:5px;height:1px;background:#000;"></div>
<div class="t" style="left:46px;top:-1px;font-size:12.5px;line-height:12.5px;color:#000;">starting</div>
<div class="t" style="left:89px;top:0px;font-family:'Liberation Mono', monospace;font-size:11.8px;line-height:12px;">/etc/rc.d/init.d/random</div>
<div class="t" style="left:255px;top:-1px;font-size:12.5px;line-height:12.5px;color:#000;">**</div>
<div class="t" style="left:9px;top:15px;font-size:12.5px;line-height:12.5px;color:#000;">Saving random seed:</div>
<div class="t" style="left:9px;top:31px;font-size:12.5px;line-height:12.5px;letter-spacing:-0.12px;color:#000;"> [72G[  [1;32mOK [0;39m ]</div>
<div class="t" style="left:9px;top:47px;font-size:12.5px;line-height:12.5px;color:#000;">**</div>
<div class="t" style="left:23px;top:47px;font-size:12.5px;line-height:12.5px;color:#000;">Re</div>
<div style="position:absolute;left:40px;top:54px;width:5px;height:1px;background:#000;"></div>
<div class="t" style="left:46px;top:47px;font-size:12.5px;line-height:12.5px;color:#000;">starting</div>
<div class="t" style="left:89px;top:48px;font-family:'Liberation Mono', monospace;font-size:11.8px;line-height:12px;">/etc/rc.d/init.d/crond</div>
<div class="t" style="left:248px;top:47px;font-size:12.5px;line-height:12.5px;color:#000;">**</div>
<div class="t" style="left:9px;top:63px;font-size:12.5px;line-height:12.5px;color:#000;">Stopping cron daemon:</div>
<div class="t" style="left:9px;top:79px;font-size:12.5px;line-height:12.5px;letter-spacing:-0.12px;color:#000;"> [72G[  [1;32mOK [0;39m ]</div>
<div style="position:absolute;left:731px;top:1px;width:16px;height:100px;background:#cdcdcd;"></div>
<div style="position:absolute;left:731px;top:1px;width:1px;height:100px;background:#404040;"></div>
<div style="position:absolute;left:746px;top:1px;width:1px;height:100px;background:#404040;"></div>
<div style="position:absolute;left:731px;top:1px;width:16px;height:16px;background:linear-gradient(#f2f2f2,#dadada);box-shadow: inset 0 0 0 1px #404040, inset 2px 2px 0 #fff;"></div>
<svg style="position:absolute;left:735px;top:6px" width="8" height="5"><path d="M4 0 L8 4.5 L0 4.5 Z" fill="#000"/></svg>
<div style="position:absolute;left:731px;top:32px;width:16px;height:37px;background:linear-gradient(90deg,#fafafa,#e4e4e4);box-shadow: inset 0 0 0 1px #404040, inset 2px 2px 0 #fff;"></div>
<div style="position:absolute;left:734px;top:47px;width:10px;height:1px;background:#a0a0a0;"></div>
<div style="position:absolute;left:734px;top:50px;width:10px;height:1px;background:#a0a0a0;"></div>
<div style="position:absolute;left:734px;top:53px;width:10px;height:1px;background:#a0a0a0;"></div>
<div style="position:absolute;left:731px;top:69px;width:16px;height:16px;background:linear-gradient(#f2f2f2,#dadada);box-shadow: inset 0 0 0 1px #404040, inset 2px 2px 0 #fff;"></div>
<svg style="position:absolute;left:735px;top:74px" width="8" height="5"><path d="M4 0 L8 4.5 L0 4.5 Z" fill="#000"/></svg>
<div style="position:absolute;left:731px;top:85px;width:16px;height:16px;background:linear-gradient(#f2f2f2,#dadada);box-shadow: inset 0 0 0 1px #404040, inset 2px 2px 0 #fff;"></div>
<svg style="position:absolute;left:735px;top:91px" width="8" height="5"><path d="M0 0 L8 0 L4 4.5 Z" fill="#000"/></svg>
<div style="position:absolute;left:0;top:0;width:749px;height:103px;box-shadow: inset 1px 1px 0 #404040, inset -1px -1px 0 #ffffff, inset -2px -2px 0 #ffffff;"></div>
</div>
<div style="position:absolute;left:6px;top:590px;width:38px;height:26px;background:#dcdcdc;box-shadow: inset 1px 1px 0 #505050, inset -1px -1px 0 #ffffff;"></div>
<svg style="position:absolute;left:16px;top:594px" width="18" height="18" viewBox="0 0 18 18">
<path d="M9.5 8 V4.5 Q9.5 1.3 12.3 1.3 Q15 1.3 15 4.5 V6.5" fill="none" stroke="#444" stroke-width="1.6"/>
<rect x="1.5" y="7.5" width="10.5" height="9" rx="1.2" fill="#a8b030" stroke="#111" stroke-width="1.4"/>
<rect x="3.5" y="9.5" width="5" height="5" fill="#e0e8a0"/>
</svg>
<div style="position:absolute;left:45px;top:590px;width:391px;height:26px;background:#dcdcdc;box-shadow: inset 1px 1px 0 #505050, inset -1px -1px 0 #ffffff;"></div>
<div class="t" style="left:45px;top:598px;font-size:12.5px;line-height:12.5px;letter-spacing:0.12px;color:#000;">/etc/rc.d/init.d/crond restart</div>
<div style="position:absolute;left:438px;top:590px;width:314px;height:26px;background:#dcdcdc;box-shadow: inset 1px 1px 0 #505050, inset -1px -1px 0 #ffffff;"></div>
<div class="t" style="left:443px;top:598px;font-size:12.5px;line-height:12.5px;color:#000;">Show Runlevels:</div>
<div style="position:absolute;left:540px;top:596px;width:13px;height:13px;background:#fff;box-shadow: inset 1px 1px 0 #a0a0a0, inset 2px 2px 0 #404040, inset -1px -1px 0 #fff;"></div>
<svg style="position:absolute;left:542px;top:598px" width="9" height="9"><path d="M1.9 1.9 L7.1 7.1 M7.1 1.9 L1.9 7.1" stroke="#000" stroke-width="2.7" stroke-linecap="butt"/></svg>
<div class="t" style="left:559px;top:597px;font-size:12px;line-height:12px;color:#000;">0</div>
<div style="position:absolute;left:570px;top:596px;width:13px;height:13px;background:#fff;box-shadow: inset 1px 1px 0 #a0a0a0, inset 2px 2px 0 #404040, inset -1px -1px 0 #fff;"></div>
<div class="t" style="left:589px;top:597px;font-size:12px;line-height:12px;color:#000;">1</div>
<div style="position:absolute;left:600px;top:596px;width:13px;height:13px;background:#fff;box-shadow: inset 1px 1px 0 #a0a0a0, inset 2px 2px 0 #404040, inset -1px -1px 0 #fff;"></div>
<svg style="position:absolute;left:602px;top:598px" width="9" height="9"><path d="M1.9 1.9 L7.1 7.1 M7.1 1.9 L1.9 7.1" stroke="#000" stroke-width="2.7" stroke-linecap="butt"/></svg>
<div class="t" style="left:619px;top:597px;font-size:12px;line-height:12px;color:#000;">2</div>
<div style="position:absolute;left:630px;top:596px;width:13px;height:13px;background:#fff;box-shadow: inset 1px 1px 0 #a0a0a0, inset 2px 2px 0 #404040, inset -1px -1px 0 #fff;"></div>
<svg style="position:absolute;left:632px;top:598px" width="9" height="9"><path d="M1.9 1.9 L7.1 7.1 M7.1 1.9 L1.9 7.1" stroke="#000" stroke-width="2.7" stroke-linecap="butt"/></svg>
<div class="t" style="left:649px;top:597px;font-size:12px;line-height:12px;color:#000;">3</div>
<div style="position:absolute;left:660px;top:596px;width:13px;height:13px;background:#fff;box-shadow: inset 1px 1px 0 #a0a0a0, inset 2px 2px 0 #404040, inset -1px -1px 0 #fff;"></div>
<div class="t" style="left:679px;top:597px;font-size:12px;line-height:12px;color:#000;">4</div>
<div style="position:absolute;left:690px;top:596px;width:13px;height:13px;background:#fff;box-shadow: inset 1px 1px 0 #a0a0a0, inset 2px 2px 0 #404040, inset -1px -1px 0 #fff;"></div>
<div class="t" style="left:709px;top:597px;font-size:12px;line-height:12px;color:#000;">5</div>
<div style="position:absolute;left:720px;top:596px;width:13px;height:13px;background:#fff;box-shadow: inset 1px 1px 0 #a0a0a0, inset 2px 2px 0 #404040, inset -1px -1px 0 #fff;"></div>
<svg style="position:absolute;left:722px;top:598px" width="9" height="9"><path d="M1.9 1.9 L7.1 7.1 M7.1 1.9 L1.9 7.1" stroke="#000" stroke-width="2.7" stroke-linecap="butt"/></svg>
<div class="t" style="left:739px;top:597px;font-size:12px;line-height:12px;color:#000;">6</div>
<div style="position:absolute;left:3px;top:617px;width:751px;height:1px;background:#404040;"></div>
<div style="position:absolute;left:3px;top:618px;width:751px;height:5px;background:#e4e4e4;"></div>
<div style="position:absolute;left:3px;top:618px;width:17px;height:5px;background:#c8c8c8;"></div>
<div style="position:absolute;left:20px;top:618px;width:1px;height:5px;background:#ffffff;"></div>
<div style="position:absolute;left:736px;top:618px;width:17px;height:5px;background:#c8c8c8;"></div>
<div style="position:absolute;left:735px;top:618px;width:1px;height:5px;background:#ffffff;"></div>
<div style="position:absolute;left:0px;top:623px;width:758px;height:2px;background:#000;"></div>
</body></html>
